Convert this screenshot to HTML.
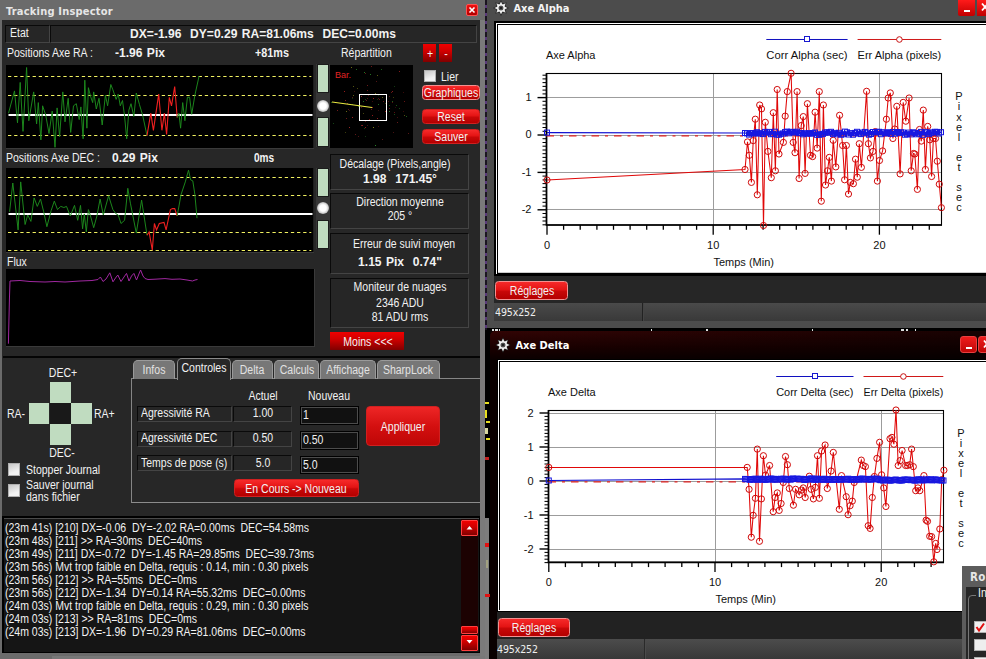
<!DOCTYPE html><html><head><meta charset='utf-8'><title>Tracking Inspector</title><style>
*{margin:0;padding:0;box-sizing:border-box}
html,body{width:986px;height:659px;overflow:hidden;background:#000}
body{position:relative;font-family:"Liberation Sans",sans-serif;font-size:12px;color:#f0f0f0}
.a{position:absolute}
.t{position:absolute;white-space:pre;line-height:14px;height:14px;font-size:12px;transform:scaleX(.875);transform-origin:0 50%;color:#f2f2f2}
.t.c{transform-origin:50% 50%;text-align:center}
.t.b{font-weight:bold;transform:scaleX(1.005);word-spacing:1px}
.tt{position:absolute;white-space:pre;font-family:"DejaVu Sans Condensed","DejaVu Sans",sans-serif;font-weight:bold;font-size:11px;line-height:14px;letter-spacing:.2px;color:#e6e6e6}
.ct{position:absolute;white-space:pre;font-size:11px;line-height:13px;color:#111}
.sunk{position:absolute;background:#262626;border:1px solid;border-color:#0a0a0a #444 #444 #0a0a0a}
.blk{position:absolute;background:#000;border:1px solid;border-color:#000 #3a3a3a #3a3a3a #000}
.pg{position:absolute;background:#c0dcc0}
.rb{position:absolute;border-radius:3.5px;border:1px solid #d02020;background:linear-gradient(#f62a2a 0%,#e41414 45%,#c80808 55%,#b40000 100%)}
.rb.f{border-color:#f49090}
.sq{position:absolute;background:linear-gradient(#f00000 0%,#d00000 40%,#800000 100%)}
.cb{position:absolute;background:linear-gradient(160deg,#c8c8c8,#f2f2f2 70%);border:1px solid #b0b0b0}
.tab{position:absolute;background:#777;border:1px solid #9a9a9a;border-bottom:none;border-radius:5px 5px 0 0}
.inp{position:absolute;background:#111;border:1px solid #4c4c4c;outline:1px solid #000}
</style></head><body><div class='a' style='left:484px;top:0;width:3px;height:330px;background:repeating-linear-gradient(#1a1420 0 5px,#5a3a7a 5px 8px)'></div><div class='a' style='left:484.5px;top:518px;width:4.5px;height:141px;background:#7c7c7c'></div><div class='a' style='left:485px;top:402px;width:4px;height:2px;background:#e8e020'></div><div class='a' style='left:485px;top:410px;width:2px;height:8px;background:#e8e020'></div><div class='a' style='left:486px;top:421px;width:4px;height:2px;background:#e8e020'></div><div class='a' style='left:485px;top:428px;width:3px;height:6px;background:#d8d8a0'></div><div class='a' style='left:486px;top:438px;width:4px;height:2px;background:#e8e020'></div><div class='a' style='left:485px;top:457px;width:4px;height:3px;background:#c02020'></div><div class='a' style='left:485px;top:543px;width:4px;height:4px;background:#e01010'></div><div class='a' style='left:485px;top:594px;width:5px;height:3px;background:#e01010'></div><div class='a' style='left:486px;top:560px;width:2px;height:8px;background:#a0a080'></div><div class='a' style='left:0px;top:0px;width:484.6px;height:659px;background:#6b6b6b'></div><div class='a' style='left:479.5px;top:20px;width:5.100000000000023px;height:639px;background:#7a7a7a'></div><div class='a' style='left:52px;top:656px;width:432.5px;height:3px;background:#787878'></div><div class='a' style='left:2px;top:20px;width:477.6px;height:633px;background:#272727'></div><div class='tt' style='left:6px;top:4.5px'>Tracking Inspector</div><div class='a' style='left:466px;top:4px;width:12px;height:12px;background:linear-gradient(#f01010,#b00000);border:1px solid #ff5050;border-radius:2px'></div><svg class='a' style='left:466px;top:4px' width='12' height='12'><path d='M3.5 3.5L8.5 8.5M8.5 3.5L3.5 8.5' stroke='#fff' stroke-width='1.6'/></svg><div class='sunk' style='left:5px;top:24.5px;width:44.5px;height:18.0px;'></div><div class='t ' style='left:10px;top:26px;'>Etat</div><div class='sunk' style='left:49.5px;top:24.5px;width:427.5px;height:18.0px;'></div><div class='t c b' style='left:62.5px;width:400px;top:26.5px;'>DX=-1.96  DY=0.29 RA=81.06ms  DEC=0.00ms</div><div class='t ' style='left:7px;top:46px;'>Positions Axe RA :</div><div class='t b' style='left:115px;top:46px;'>-1.96 Pix</div><div class='t b' style='left:255px;top:46px;transform:scaleX(.9)'>+81ms</div><div class='t ' style='left:341px;top:46px;'>Répartition</div><div class='sq' style='left:423px;top:44px;width:13px;height:18px;'></div><div class='t c ' style='left:423.5px;width:12px;top:47px;'>+</div><div class='sq' style='left:439px;top:44px;width:13px;height:18px;'></div><div class='t c ' style='left:439.5px;width:12px;top:47px;'>-</div><div class='blk' style='left:6px;top:65px;width:308.4px;height:84px;border-top:none;border-left:none'></div><svg class='a' style='left:6px;top:65px' width='307.5' height='83' viewBox='6 65 307.5 83'><rect x='6' y='65' width='307.5' height='83' fill='#000'/><line x1='8' x2='311.3' y1='76.5' y2='76.5' stroke='#f0f060' stroke-width='1' stroke-dasharray='3.3 2.85'/><line x1='8' x2='311.3' y1='95.5' y2='95.5' stroke='#f0f060' stroke-width='1' stroke-dasharray='3.3 2.85'/><line x1='8' x2='311.3' y1='135.5' y2='135.5' stroke='#f0f060' stroke-width='1' stroke-dasharray='3.3 2.85'/><rect x='8.5' y='114' width='304.0' height='2' fill='#fff'/><polyline points='8.5,113.2 14.5,90.9 17.5,122.8 20.2,82.4 23.0,131.4 26.6,67.5 28.8,120.7 33.7,91.9 36.6,123.9 38.3,102.6 40.9,139.9 42.6,105.8 45.8,115.4 49.0,133.5 52.2,111.1 55.0,147.3 57.1,107.9 59.6,136.7 62.8,91.9 65.0,121.8 68.2,98.3 70.7,132.4 73.5,105.8 76.3,103.7 79.2,119.6 80.9,106.9 83.1,138.8 84.8,80.2 86.9,128.2 88.4,87.7 90.5,96.2 92.7,102.6 93.7,91.9 96.3,109.0 99.0,98.3 102.2,125.0 105.4,95.1 107.6,105.8 110.8,84.5 112.9,89.8 116.1,99.4 118.2,94.1 120.3,105.8 122.5,100.5 124.6,116.4 126.7,138.8 128.9,110.1 131.0,103.7 133.8,116.4 136.3,93.0 139.5,104.7 142.7,115.4 147.0,135.6' fill='none' stroke='#1e8c1e' stroke-width='0.95'/><polyline points='147.0,135.6 150.8,113.2 153.4,130.3 158.7,94.1 161.9,130.3 164.4,113.2 166.6,134.5 169.3,97.3 171.5,105.8 174.7,86.6 177.2,117.5' fill='none' stroke='#f02020' stroke-width='1.1'/><polyline points='177.2,117.5 178.9,113.2 180.6,128.2 182.7,102.6 184.9,120.7 187.4,97.3 189.6,97.3 191.7,114.3 194.9,95.1 199.1,76.0' fill='none' stroke='#1e8c1e' stroke-width='0.95'/></svg><div class='t ' style='left:5.5px;top:151px;'>Positions Axe DEC :</div><div class='t b' style='left:112px;top:151px;'>0.29 Pix</div><div class='t b' style='left:253.5px;top:151px;transform:scaleX(.84)'>0ms</div><div class='blk' style='left:6px;top:168px;width:308.4px;height:85px;border-top:none;border-left:none'></div><svg class='a' style='left:6px;top:168px' width='307.5' height='84' viewBox='6 168 307.5 84'><rect x='6' y='168' width='307.5' height='84' fill='#000'/><line x1='8' x2='311.3' y1='177.5' y2='177.5' stroke='#f0f060' stroke-width='1' stroke-dasharray='3.3 2.85'/><line x1='8' x2='311.3' y1='195.5' y2='195.5' stroke='#f0f060' stroke-width='1' stroke-dasharray='3.3 2.85'/><line x1='8' x2='311.3' y1='232.5' y2='232.5' stroke='#f0f060' stroke-width='1' stroke-dasharray='3.3 2.85'/><line x1='8' x2='311.3' y1='250.5' y2='250.5' stroke='#f0f060' stroke-width='1' stroke-dasharray='3.3 2.85'/><rect x='8.5' y='213' width='304.0' height='2' fill='#fff'/><polyline points='9.6,211.8 12.8,183.0 18.1,229.9 20.7,181.9 25.1,224.5 27.7,215.0 30.9,221.4 34.1,197.9 37.3,206.4 40.5,199.0 43.7,211.8 46.9,226.7 51.1,210.7 54.3,201.1 57.5,209.6 60.7,206.4 63.9,207.5 66.5,206.4 70.3,216.0 74.5,205.4 77.7,220.3 80.5,205.4 82.6,228.8 84.3,213.9 86.3,232.0 88.4,209.6 90.5,216.0 93.7,227.7 96.9,216.0 100.1,199.0 103.3,215.0 108.6,195.8 112.9,209.6 116.1,213.9 118.2,215.0 121.0,223.5 124.6,220.3 127.8,188.3 130.4,203.2 136.3,233.1 141.6,200.1 147.0,235.2' fill='none' stroke='#1e8c1e' stroke-width='0.95'/><polyline points='147.0,235.2 149.1,232.0 152.3,250.1 154.4,223.5 156.5,229.9 159.3,223.5 164.0,222.4 166.1,229.9 170.4,209.6 172.5,208.6 174.7,208.6 177.2,216.0' fill='none' stroke='#f02020' stroke-width='1.1'/><polyline points='177.2,216.0 181.0,194.7 185.3,181.9 188.5,170.2 190.6,179.8 192.8,180.9 194.9,194.7 197.0,218.2' fill='none' stroke='#1e8c1e' stroke-width='0.95'/></svg><div class='a' style='left:316px;top:63.5px;width:13.5px;height:83.80000000000001px;background:#363636'></div><div class='pg' style='left:316.7px;top:63.5px;width:12.0px;height:29.700000000000003px;border:1px solid #1c1c1c'></div><div class='pg' style='left:316.7px;top:117.3px;width:12.0px;height:30.000000000000014px;border:1px solid #1c1c1c'></div><div class='a' style='left:316.5px;top:99.7px;width:12px;height:12px;border-radius:50%;background:radial-gradient(circle at 50% 50%,#fff 0%,#fff 38%,#d4d4d4 60%,#8a8a8a 80%,rgba(70,70,70,0) 100%)'></div><div class='a' style='left:316px;top:167.5px;width:13.5px;height:81.80000000000001px;background:#363636'></div><div class='pg' style='left:316.7px;top:167.5px;width:12.0px;height:29.5px;border:1px solid #1c1c1c'></div><div class='pg' style='left:316.7px;top:219.5px;width:12.0px;height:29.80000000000001px;border:1px solid #1c1c1c'></div><div class='a' style='left:316.5px;top:202px;width:12px;height:12px;border-radius:50%;background:radial-gradient(circle at 50% 50%,#fff 0%,#fff 38%,#d4d4d4 60%,#8a8a8a 80%,rgba(70,70,70,0) 100%)'></div><div class='t ' style='left:7px;top:255px;'>Flux</div><div class='blk' style='left:6px;top:268.5px;width:309px;height:78.5px;border-top:none;border-left:none'></div><svg class='a' style='left:6px;top:269px' width='308' height='77' viewBox='6 269 308 77'><polyline points='8.4,343.7 9.4,300.0 10.0,281.0 20.0,280.5 30.0,281.5 45.0,282.0 55.0,281.5 65.0,282.0 80.0,281.0 92.0,280.5 98.0,279.5 100.4,277.0 103.0,281.5 106.0,279.0 109.8,272.8 113.0,281.8 115.5,278.0 117.8,275.0 121.0,281.5 124.0,277.0 126.5,273.4 129.0,281.0 131.5,276.0 133.9,273.4 136.5,280.0 138.5,275.0 140.6,270.0 143.0,276.0 145.0,278.5 148.0,279.5 155.0,279.2 165.0,278.6 172.0,279.3 180.0,279.0 187.0,280.0 192.5,281.0 195.0,280.0 197.5,279.5' fill='none' stroke='#a028a0' stroke-width='1'/></svg><div class='a' style='left:330px;top:65px;width:83px;height:83px;background:#000'></div><svg class='a' style='left:330px;top:65px' width='83' height='83' viewBox='330 65 83 83'><rect x='373' y='127' width='1' height='1' fill='#a0a020' opacity='0.80'/><rect x='349' y='110' width='1' height='1' fill='#c03030' opacity='0.31'/><rect x='378' y='95' width='1' height='1' fill='#208020' opacity='0.41'/><rect x='367' y='85' width='1' height='1' fill='#c03030' opacity='0.56'/><rect x='365' y='99' width='1' height='1' fill='#30a030' opacity='0.38'/><rect x='386' y='98' width='1' height='1' fill='#b02020' opacity='0.67'/><rect x='397' y='117' width='1' height='1' fill='#c03030' opacity='0.32'/><rect x='377' y='75' width='1' height='1' fill='#a0a020' opacity='0.56'/><rect x='364' y='72' width='1' height='1' fill='#30a030' opacity='0.73'/><rect x='346' y='118' width='1' height='1' fill='#c03030' opacity='0.54'/><rect x='403' y='92' width='1' height='1' fill='#b02020' opacity='0.32'/><rect x='358' y='106' width='1' height='1' fill='#30a030' opacity='0.54'/><rect x='361' y='96' width='1' height='1' fill='#c03030' opacity='0.76'/><rect x='352' y='97' width='1' height='1' fill='#802020' opacity='0.62'/><rect x='392' y='91' width='1' height='1' fill='#b02020' opacity='0.77'/><rect x='396' y='105' width='1' height='1' fill='#208020' opacity='0.68'/><rect x='361' y='125' width='1' height='1' fill='#c03030' opacity='0.61'/><rect x='368' y='95' width='1' height='1' fill='#c03030' opacity='0.45'/><rect x='385' y='120' width='1' height='1' fill='#30a030' opacity='0.84'/><rect x='397' y='122' width='1' height='1' fill='#802020' opacity='0.79'/><rect x='389' y='108' width='1' height='1' fill='#802020' opacity='0.78'/><rect x='394' y='112' width='1' height='1' fill='#b02020' opacity='0.51'/><rect x='353' y='95' width='1' height='1' fill='#a0a020' opacity='0.58'/><rect x='386' y='106' width='1' height='1' fill='#b02020' opacity='0.36'/><rect x='385' y='103' width='1' height='1' fill='#a0a020' opacity='0.39'/><rect x='404' y='115' width='1' height='1' fill='#a0a020' opacity='0.50'/><rect x='393' y='132' width='1' height='1' fill='#802020' opacity='0.55'/><rect x='347' y='103' width='1' height='1' fill='#c03030' opacity='0.67'/><rect x='408' y='133' width='1' height='1' fill='#c03030' opacity='0.45'/><rect x='353' y='86' width='1' height='1' fill='#a0a020' opacity='0.54'/><rect x='370' y='120' width='1' height='1' fill='#a0a020' opacity='0.31'/><rect x='352' y='117' width='1' height='1' fill='#b02020' opacity='0.51'/><rect x='363' y='101' width='1' height='1' fill='#30a030' opacity='0.65'/><rect x='346' y='111' width='1' height='1' fill='#a0a020' opacity='0.63'/><rect x='367' y='125' width='1' height='1' fill='#c03030' opacity='0.33'/><rect x='351' y='67' width='1' height='1' fill='#a0a020' opacity='0.65'/><rect x='364' y='128' width='1' height='1' fill='#208020' opacity='0.50'/><rect x='365' y='121' width='1' height='1' fill='#c03030' opacity='0.45'/><rect x='373' y='98' width='1' height='1' fill='#b02020' opacity='0.83'/><rect x='367' y='98' width='1' height='1' fill='#c03030' opacity='0.42'/><rect x='375' y='94' width='1' height='1' fill='#208020' opacity='0.67'/><rect x='366' y='100' width='1' height='1' fill='#c03030' opacity='0.48'/><rect x='355' y='134' width='1' height='1' fill='#802020' opacity='0.75'/><rect x='378' y='104' width='1' height='1' fill='#30a030' opacity='0.66'/><rect x='385' y='94' width='1' height='1' fill='#208020' opacity='0.73'/><rect x='358' y='136' width='1' height='1' fill='#c03030' opacity='0.40'/><rect x='365' y='136' width='1' height='1' fill='#30a030' opacity='0.35'/><rect x='354' y='91' width='1' height='1' fill='#802020' opacity='0.46'/><rect x='375' y='93' width='1' height='1' fill='#a0a020' opacity='0.65'/><rect x='365' y='127' width='1' height='1' fill='#b02020' opacity='0.81'/><rect x='372' y='107' width='1' height='1' fill='#c03030' opacity='0.84'/><rect x='333' y='123' width='1' height='1' fill='#30a030' opacity='0.42'/><rect x='370' y='74' width='1' height='1' fill='#30a030' opacity='0.71'/><rect x='392' y='101' width='1' height='1' fill='#208020' opacity='0.77'/><rect x='399' y='71' width='1' height='1' fill='#b02020' opacity='0.75'/><rect x='406' y='116' width='1' height='1' fill='#30a030' opacity='0.58'/><rect x='382' y='139' width='1' height='1' fill='#802020' opacity='0.62'/><rect x='399' y='108' width='1' height='1' fill='#208020' opacity='0.58'/><rect x='371' y='109' width='1' height='1' fill='#c03030' opacity='0.53'/><rect x='393' y='97' width='1' height='1' fill='#a0a020' opacity='0.37'/><rect x='392' y='102' width='1' height='1' fill='#b02020' opacity='0.49'/><rect x='378' y='126' width='1' height='1' fill='#b02020' opacity='0.39'/><rect x='381' y='69' width='1' height='1' fill='#208020' opacity='0.75'/><rect x='395' y='107' width='1' height='1' fill='#802020' opacity='0.33'/><rect x='369' y='119' width='1' height='1' fill='#c03030' opacity='0.59'/><rect x='385' y='111' width='1' height='1' fill='#b02020' opacity='0.77'/><rect x='372' y='101' width='1' height='1' fill='#b02020' opacity='0.34'/><rect x='404' y='101' width='1' height='1' fill='#b02020' opacity='0.58'/><rect x='361' y='107' width='1' height='1' fill='#b02020' opacity='0.49'/><rect x='357' y='88' width='1' height='1' fill='#a0a020' opacity='0.45'/><rect x='389' y='105' width='1' height='1' fill='#208020' opacity='0.61'/><rect x='367' y='90' width='1' height='1' fill='#b02020' opacity='0.61'/><rect x='389' y='111' width='1' height='1' fill='#30a030' opacity='0.73'/><rect x='349' y='127' width='1' height='1' fill='#c03030' opacity='0.79'/><rect x='394' y='114' width='1' height='1' fill='#30a030' opacity='0.47'/><rect x='388' y='101' width='1' height='1' fill='#b02020' opacity='0.43'/><rect x='345' y='100' width='1' height='1' fill='#b02020' opacity='0.74'/><rect x='372' y='115' width='1' height='1' fill='#b02020' opacity='0.82'/><rect x='345' y='132' width='1' height='1' fill='#a0a020' opacity='0.37'/><rect x='356' y='69' width='1' height='1' fill='#30a030' opacity='0.66'/><rect x='394' y='86' width='1' height='1' fill='#30a030' opacity='0.36'/><rect x='362' y='125' width='1' height='1' fill='#c03030' opacity='0.69'/><rect x='359' y='108' width='1' height='1' fill='#802020' opacity='0.32'/><rect x='378' y='110' width='1' height='1' fill='#802020' opacity='0.40'/><rect x='403' y='111' width='1' height='1' fill='#b02020' opacity='0.31'/><rect x='386' y='119' width='1' height='1' fill='#30a030' opacity='0.82'/><rect x='344' y='91' width='1' height='1' fill='#b02020' opacity='0.85'/><rect x='352' y='98' width='1' height='1' fill='#208020' opacity='0.36'/><rect x='371' y='66' width='1' height='1' fill='#b02020' opacity='0.60'/><rect x='378' y='98' width='1' height='1' fill='#b02020' opacity='0.43'/><rect x='377' y='118' width='1' height='1' fill='#c03030' opacity='0.69'/><rect x='383' y='101' width='1' height='1' fill='#c03030' opacity='0.52'/><rect x='361' y='120' width='1' height='1' fill='#b02020' opacity='0.51'/><rect x='375' y='145' width='1' height='1' fill='#30a030' opacity='0.83'/><rect x='352' y='117' width='1' height='1' fill='#c03030' opacity='0.67'/><rect x='352' y='104' width='1' height='1' fill='#30a030' opacity='0.52'/><rect x='379' y='99' width='1' height='1' fill='#802020' opacity='0.71'/><rect x='389' y='96' width='1' height='1' fill='#802020' opacity='0.62'/><rect x='377' y='99' width='1' height='1' fill='#208020' opacity='0.38'/><rect x='331' y='102' width='1' height='1' fill='#30a030' opacity='0.60'/><rect x='376' y='81' width='1' height='1' fill='#802020' opacity='0.63'/><rect x='382' y='97' width='1' height='1' fill='#a0a020' opacity='0.56'/><rect x='363' y='113' width='1' height='1' fill='#a0a020' opacity='0.43'/><rect x='337' y='110' width='1' height='1' fill='#802020' opacity='0.85'/><rect x='348' y='109' width='1' height='1' fill='#802020' opacity='0.62'/><rect x='391' y='92' width='1' height='1' fill='#b02020' opacity='0.56'/><rect x='365' y='73' width='1' height='1' fill='#802020' opacity='0.73'/><rect x='359.5' y='94.5' width='27' height='26' fill='none' stroke='#fff' stroke-width='1'/><line x1='332' y1='102' x2='372' y2='107.5' stroke='#e8e840' stroke-width='1.2'/><text x='335' y='78' font-family='Liberation Sans,sans-serif' font-size='9' fill='#e02424' textLength='16'>Bar.</text></svg><div class='cb' style='left:424px;top:70px;width:12px;height:12px;'></div><div class='t ' style='left:441px;top:70px;'>Lier</div><div class='rb f' style='left:422px;top:85px;width:58px;height:15px;'></div><div class='t c ' style='left:411.0px;width:80px;top:85.5px;'>Graphiques</div><div class='rb' style='left:422px;top:109px;width:58px;height:15px;'></div><div class='t c ' style='left:411.0px;width:80px;top:109.5px;'>Reset</div><div class='rb' style='left:422px;top:129px;width:58px;height:15px;'></div><div class='t c ' style='left:411.0px;width:80px;top:129.5px;'>Sauver</div><div class='sunk' style='left:330px;top:154px;width:139px;height:36px;'></div><div class='t c ' style='left:295.0px;width:200px;top:157px;'>Décalage (Pixels,angle)</div><div class='t c b' style='left:299.5px;width:200px;top:172px;'>1.98  171.45°</div><div class='sunk' style='left:330px;top:193px;width:139px;height:36px;'></div><div class='t c ' style='left:299.5px;width:200px;top:195px;'>Direction moyenne</div><div class='t c ' style='left:299.5px;width:200px;top:209px;'>205 °</div><div class='sunk' style='left:330px;top:233px;width:139px;height:41px;'></div><div class='t c ' style='left:304.0px;width:200px;top:237px;'>Erreur de suivi moyen</div><div class='t c b' style='left:299.5px;width:200px;top:254.5px;'>1.15 Pix  0.74"</div><div class='sunk' style='left:330px;top:278px;width:139px;height:50px;'></div><div class='t c ' style='left:299.5px;width:200px;top:280px;'>Moniteur de nuages</div><div class='t c ' style='left:299.5px;width:200px;top:295.5px;'>2346 ADU</div><div class='t c ' style='left:299.5px;width:200px;top:310px;'>81 ADU rms</div><div class='sq' style='left:330px;top:332px;width:74px;height:18px;'></div><div class='t c ' style='left:327.5px;width:80px;top:335.3px;'>Moins &lt;&lt;&lt;</div><div class='a' style='left:3px;top:356px;width:477px;height:2px;background:#050505'></div><div class='t c ' style='left:33.0px;width:60px;top:366px;'>DEC+</div><div class='t c ' style='left:32.0px;width:60px;top:446px;'>DEC-</div><div class='t ' style='left:6.5px;top:407px;'>RA-</div><div class='t ' style='left:94px;top:407px;'>RA+</div><div class='a' style='left:50px;top:403px;width:21px;height:21px;background:#191919'></div><div class='pg' style='left:50px;top:382px;width:20.5px;height:20.5px;'></div><div class='pg' style='left:28.5px;top:403px;width:20.5px;height:20.5px;'></div><div class='pg' style='left:71px;top:403px;width:20.5px;height:20.5px;'></div><div class='pg' style='left:50px;top:424px;width:20.5px;height:20.5px;'></div><div class='cb' style='left:7.5px;top:463px;width:12.5px;height:12.5px;'></div><div class='t ' style='left:25.5px;top:463px;'>Stopper Journal</div><div class='cb' style='left:7.5px;top:484px;width:12.5px;height:12.5px;'></div><div class='t ' style='left:25.5px;top:477.5px;'>Sauver journal</div><div class='t ' style='left:25.5px;top:490px;'>dans fichier</div><div class='a' style='left:131px;top:378px;width:349px;height:125px;background:#272727;border:1px solid #858585;border-right:none;border-bottom-color:#8c8c8c'></div><div class='tab' style='left:133px;top:360px;width:42px;height:18.5px;'></div><div class='t c ' style='left:114.0px;width:80px;top:362.5px;color:#e2e2e2'>Infos</div><div class='tab' style='left:231.5px;top:360px;width:41.5px;height:18.5px;'></div><div class='t c ' style='left:212.25px;width:80px;top:362.5px;color:#e2e2e2'>Delta</div><div class='tab' style='left:274px;top:360px;width:45px;height:18.5px;'></div><div class='t c ' style='left:256.5px;width:80px;top:362.5px;color:#e2e2e2'>Calculs</div><div class='tab' style='left:320px;top:360px;width:55.5px;height:18.5px;'></div><div class='t c ' style='left:307.75px;width:80px;top:362.5px;color:#e2e2e2'>Affichage</div><div class='tab' style='left:376.5px;top:360px;width:63.0px;height:18.5px;'></div><div class='t c ' style='left:368.0px;width:80px;top:362.5px;color:#e2e2e2'>SharpLock</div><div class='tab' style='left:176.5px;top:358px;width:54.0px;height:21.5px;background:#272727;border-color:#8a8a8a'></div><div class='t c ' style='left:163.5px;width:80px;top:361px;'>Controles</div><div class='t c ' style='left:223.0px;width:80px;top:389px;'>Actuel</div><div class='t c ' style='left:289.0px;width:80px;top:389px;'>Nouveau</div><div class='sunk' style='left:137px;top:405.5px;width:95px;height:16.0px;'></div><div class='t ' style='left:141px;top:406.0px;'>Agressivité RA</div><div class='sunk' style='left:233px;top:405.5px;width:59px;height:16.0px;'></div><div class='t c ' style='left:232.5px;width:60px;top:406.0px;'>1.00</div><div class='inp' style='left:301px;top:407.0px;width:56.5px;height:16.5px;'></div><div class='t ' style='left:302.5px;top:408.0px;'>1</div><div class='sunk' style='left:137px;top:430.5px;width:95px;height:16.0px;'></div><div class='t ' style='left:141px;top:431.0px;'>Agressivité DEC</div><div class='sunk' style='left:233px;top:430.5px;width:59px;height:16.0px;'></div><div class='t c ' style='left:232.5px;width:60px;top:431.0px;'>0.50</div><div class='inp' style='left:301px;top:432.0px;width:56.5px;height:16.5px;'></div><div class='t ' style='left:302.5px;top:433.0px;'>0.50</div><div class='sunk' style='left:137px;top:455.3px;width:95px;height:16.0px;'></div><div class='t ' style='left:141px;top:455.8px;'>Temps de pose (s)</div><div class='sunk' style='left:233px;top:455.3px;width:59px;height:16.0px;'></div><div class='t c ' style='left:232.5px;width:60px;top:455.8px;'>5.0</div><div class='inp' style='left:301px;top:456.8px;width:56.5px;height:16.5px;'></div><div class='t ' style='left:302.5px;top:457.8px;'>5.0</div><div class='rb' style='left:366px;top:406px;width:73.5px;height:40px;border-radius:4px;background:linear-gradient(#ee2626,#d41010 50%,#be0606)'></div><div class='t c ' style='left:363.0px;width:80px;top:419.5px;'>Appliquer</div><div class='rb' style='left:233.5px;top:479px;width:125.0px;height:18px;'></div><div class='t c ' style='left:226.0px;width:140px;top:481.7px;'>En Cours -&gt; Nouveau</div><div class='a' style='left:2px;top:516px;width:477.6px;height:137px;background:#000'></div><div class='a' style='left:3.6px;top:518.3px;width:475.4px;height:133.70000000000005px;background:#151515;border-top:1px solid #4a4a4a'></div><div class='t ' style='left:4.8px;top:521px;'>(23m 41s) [210] DX=-0.06  DY=-2.02 RA=0.00ms  DEC=54.58ms</div><div class='t ' style='left:4.8px;top:534px;'>(23m 48s) [211] &gt;&gt; RA=30ms  DEC=40ms</div><div class='t ' style='left:4.8px;top:547px;'>(23m 49s) [211] DX=-0.72  DY=-1.45 RA=29.85ms  DEC=39.73ms</div><div class='t ' style='left:4.8px;top:560px;'>(23m 56s) Mvt trop faible en Delta, requis : 0.14, min : 0.30 pixels</div><div class='t ' style='left:4.8px;top:573px;'>(23m 56s) [212] &gt;&gt; RA=55ms  DEC=0ms</div><div class='t ' style='left:4.8px;top:586px;'>(23m 56s) [212] DX=-1.34  DY=0.14 RA=55.32ms  DEC=0.00ms</div><div class='t ' style='left:4.8px;top:599px;'>(24m 03s) Mvt trop faible en Delta, requis : 0.29, min : 0.30 pixels</div><div class='t ' style='left:4.8px;top:612px;'>(24m 03s) [213] &gt;&gt; RA=81ms  DEC=0ms</div><div class='t ' style='left:4.8px;top:625px;'>(24m 03s) [213] DX=-1.96  DY=0.29 RA=81.06ms  DEC=0.00ms</div><div class='a' style='left:461px;top:519px;width:17px;height:132px;background:#1c0202'></div><div class='sq' style='left:461px;top:519.5px;width:17px;height:16.0px;border:1px solid #ff4040;border-radius:1px'></div><div class='sq' style='left:461px;top:626px;width:17px;height:8px;border:1px solid #ff4040;border-radius:1px'></div><div class='sq' style='left:461px;top:634.5px;width:17px;height:16.5px;border:1px solid #ff4040;border-radius:1px'></div><svg class='a' style='left:461px;top:519px' width='17' height='132'><path d='M5.5 10.5L11.5 10.5L8.5 7z' fill='#fff'/><path d='M5.5 121L11.5 121L8.5 124.5z' fill='#fff'/></svg><div class='a' style='left:487px;top:0px;width:499px;height:328px;background:#4c4c4c'></div><div class='a' style='left:494px;top:21px;width:492px;height:255px;background:#000'></div><div class='a' style='left:496px;top:23px;width:490px;height:251px;background:#fff'></div><div class='a' style='left:497px;top:24px;width:489px;height:249.5px;background:#000'></div><div class='a' style='left:494px;top:276px;width:492px;height:26.5px;background:#262626'></div><div class='a' style='left:494px;top:302.5px;width:492px;height:18.5px;background:linear-gradient(#4a4a4a,#393939)'></div><div class='a' style='left:642px;top:303px;width:1px;height:18px;background:#222;border-right:1px solid #444;width:2px'></div><div class='tt' style='left:513.4px;top:1.5px;letter-spacing:0;color:#f4f4f4'>Axe Alpha</div><svg class='a' style='left:493px;top:-0.4px' width='16' height='16' viewBox='-8 -8 16 16'><polygon points='0.00,-6.60 1.49,-3.60 4.67,-4.67 3.60,-1.49 6.60,0.00 3.60,1.49 4.67,4.67 1.49,3.60 0.00,6.60 -1.49,3.60 -4.67,4.67 -3.60,1.49 -6.60,0.00 -3.60,-1.49 -4.67,-4.67 -1.49,-3.60' fill='#e4e4e4' stroke='#1a1a1a' stroke-width='1.2' paint-order='stroke'/><circle r='2.6' fill='#555'/><circle r='1.3' fill='#222'/><circle r='3.3' fill='none' stroke='#fff' stroke-width='.8'/></svg><div class='a' style='left:958px;top:0px;width:16.5px;height:15.5px;background:linear-gradient(#ff1a1a,#c00000);border-radius:0 0 2px 2px'></div><div class='a' style='left:964px;top:10px;width:6px;height:2px;background:#fff'></div><div class='a' style='left:976.5px;top:0px;width:13.5px;height:15.5px;background:linear-gradient(#ff1a1a,#c00000)'></div><svg class='a' style='left:976px;top:0' width='10' height='16'><path d='M6 3.5L12 10.5M12 3.5L6 10.5' stroke='#fff' stroke-width='1.8'/></svg><svg class='a' style='left:498px;top:25px' width='488' height='247.8' viewBox='498 25 488 247.8'><rect x='498' y='25' width='488' height='247.8' fill='#fff'/><line x1='546.5' x2='941.5' y1='97.5' y2='97.5' stroke='#9c9c9c' stroke-width='1'/><line x1='546.5' x2='941.5' y1='135.5' y2='135.5' stroke='#9c9c9c' stroke-width='1'/><line x1='546.5' x2='941.5' y1='172.5' y2='172.5' stroke='#9c9c9c' stroke-width='1'/><line x1='546.5' x2='941.5' y1='209.5' y2='209.5' stroke='#9c9c9c' stroke-width='1'/><line x1='713.5' x2='713.5' y1='73.5' y2='225' stroke='#9c9c9c' stroke-width='1'/><line x1='879.5' x2='879.5' y1='73.5' y2='225' stroke='#9c9c9c' stroke-width='1'/><line x1='542.5' x2='546.5' y1='224.8' y2='224.8' stroke='#000' stroke-width='1.05'/><line x1='542.5' x2='546.5' y1='221.0' y2='221.0' stroke='#000' stroke-width='1.05'/><line x1='542.5' x2='546.5' y1='217.3' y2='217.3' stroke='#000' stroke-width='1.05'/><line x1='542.5' x2='546.5' y1='213.5' y2='213.5' stroke='#000' stroke-width='1.05'/><line x1='537.5' x2='546.5' y1='209.8' y2='209.8' stroke='#000' stroke-width='1.4'/><line x1='542.5' x2='546.5' y1='206.1' y2='206.1' stroke='#000' stroke-width='1.05'/><line x1='542.5' x2='546.5' y1='202.3' y2='202.3' stroke='#000' stroke-width='1.05'/><line x1='542.5' x2='546.5' y1='198.6' y2='198.6' stroke='#000' stroke-width='1.05'/><line x1='542.5' x2='546.5' y1='194.8' y2='194.8' stroke='#000' stroke-width='1.05'/><line x1='542.5' x2='546.5' y1='191.1' y2='191.1' stroke='#000' stroke-width='1.05'/><line x1='542.5' x2='546.5' y1='187.4' y2='187.4' stroke='#000' stroke-width='1.05'/><line x1='542.5' x2='546.5' y1='183.6' y2='183.6' stroke='#000' stroke-width='1.05'/><line x1='542.5' x2='546.5' y1='179.9' y2='179.9' stroke='#000' stroke-width='1.05'/><line x1='542.5' x2='546.5' y1='176.1' y2='176.1' stroke='#000' stroke-width='1.05'/><line x1='537.5' x2='546.5' y1='172.4' y2='172.4' stroke='#000' stroke-width='1.4'/><line x1='542.5' x2='546.5' y1='168.7' y2='168.7' stroke='#000' stroke-width='1.05'/><line x1='542.5' x2='546.5' y1='164.9' y2='164.9' stroke='#000' stroke-width='1.05'/><line x1='542.5' x2='546.5' y1='161.2' y2='161.2' stroke='#000' stroke-width='1.05'/><line x1='542.5' x2='546.5' y1='157.4' y2='157.4' stroke='#000' stroke-width='1.05'/><line x1='542.5' x2='546.5' y1='153.7' y2='153.7' stroke='#000' stroke-width='1.05'/><line x1='542.5' x2='546.5' y1='150.0' y2='150.0' stroke='#000' stroke-width='1.05'/><line x1='542.5' x2='546.5' y1='146.2' y2='146.2' stroke='#000' stroke-width='1.05'/><line x1='542.5' x2='546.5' y1='142.5' y2='142.5' stroke='#000' stroke-width='1.05'/><line x1='542.5' x2='546.5' y1='138.7' y2='138.7' stroke='#000' stroke-width='1.05'/><line x1='537.5' x2='546.5' y1='135.0' y2='135.0' stroke='#000' stroke-width='1.4'/><line x1='542.5' x2='546.5' y1='131.3' y2='131.3' stroke='#000' stroke-width='1.05'/><line x1='542.5' x2='546.5' y1='127.5' y2='127.5' stroke='#000' stroke-width='1.05'/><line x1='542.5' x2='546.5' y1='123.8' y2='123.8' stroke='#000' stroke-width='1.05'/><line x1='542.5' x2='546.5' y1='120.0' y2='120.0' stroke='#000' stroke-width='1.05'/><line x1='542.5' x2='546.5' y1='116.3' y2='116.3' stroke='#000' stroke-width='1.05'/><line x1='542.5' x2='546.5' y1='112.6' y2='112.6' stroke='#000' stroke-width='1.05'/><line x1='542.5' x2='546.5' y1='108.8' y2='108.8' stroke='#000' stroke-width='1.05'/><line x1='542.5' x2='546.5' y1='105.1' y2='105.1' stroke='#000' stroke-width='1.05'/><line x1='542.5' x2='546.5' y1='101.3' y2='101.3' stroke='#000' stroke-width='1.05'/><line x1='537.5' x2='546.5' y1='97.6' y2='97.6' stroke='#000' stroke-width='1.4'/><line x1='542.5' x2='546.5' y1='93.9' y2='93.9' stroke='#000' stroke-width='1.05'/><line x1='542.5' x2='546.5' y1='90.1' y2='90.1' stroke='#000' stroke-width='1.05'/><line x1='542.5' x2='546.5' y1='86.4' y2='86.4' stroke='#000' stroke-width='1.05'/><line x1='542.5' x2='546.5' y1='82.6' y2='82.6' stroke='#000' stroke-width='1.05'/><line x1='542.5' x2='546.5' y1='78.9' y2='78.9' stroke='#000' stroke-width='1.05'/><line x1='542.5' x2='546.5' y1='75.2' y2='75.2' stroke='#000' stroke-width='1.05'/><line x1='547.0' x2='547.0' y1='225' y2='234.7' stroke='#000' stroke-width='1.3'/><text x='547.0' y='249.3' text-anchor='middle' font-family='Liberation Sans,sans-serif' font-size='11' fill='#111'>0</text><line x1='563.6' x2='563.6' y1='225' y2='229.8' stroke='#000' stroke-width='1.3'/><line x1='580.2' x2='580.2' y1='225' y2='229.8' stroke='#000' stroke-width='1.3'/><line x1='596.9' x2='596.9' y1='225' y2='229.8' stroke='#000' stroke-width='1.3'/><line x1='613.5' x2='613.5' y1='225' y2='229.8' stroke='#000' stroke-width='1.3'/><line x1='630.1' x2='630.1' y1='225' y2='229.8' stroke='#000' stroke-width='1.3'/><line x1='646.7' x2='646.7' y1='225' y2='229.8' stroke='#000' stroke-width='1.3'/><line x1='663.3' x2='663.3' y1='225' y2='229.8' stroke='#000' stroke-width='1.3'/><line x1='680.0' x2='680.0' y1='225' y2='229.8' stroke='#000' stroke-width='1.3'/><line x1='696.6' x2='696.6' y1='225' y2='229.8' stroke='#000' stroke-width='1.3'/><line x1='713.2' x2='713.2' y1='225' y2='234.7' stroke='#000' stroke-width='1.3'/><text x='713.2' y='249.3' text-anchor='middle' font-family='Liberation Sans,sans-serif' font-size='11' fill='#111'>10</text><line x1='729.8' x2='729.8' y1='225' y2='229.8' stroke='#000' stroke-width='1.3'/><line x1='746.4' x2='746.4' y1='225' y2='229.8' stroke='#000' stroke-width='1.3'/><line x1='763.1' x2='763.1' y1='225' y2='229.8' stroke='#000' stroke-width='1.3'/><line x1='779.7' x2='779.7' y1='225' y2='229.8' stroke='#000' stroke-width='1.3'/><line x1='796.3' x2='796.3' y1='225' y2='229.8' stroke='#000' stroke-width='1.3'/><line x1='812.9' x2='812.9' y1='225' y2='229.8' stroke='#000' stroke-width='1.3'/><line x1='829.5' x2='829.5' y1='225' y2='229.8' stroke='#000' stroke-width='1.3'/><line x1='846.2' x2='846.2' y1='225' y2='229.8' stroke='#000' stroke-width='1.3'/><line x1='862.8' x2='862.8' y1='225' y2='229.8' stroke='#000' stroke-width='1.3'/><line x1='879.4' x2='879.4' y1='225' y2='234.7' stroke='#000' stroke-width='1.3'/><text x='879.4' y='249.3' text-anchor='middle' font-family='Liberation Sans,sans-serif' font-size='11' fill='#111'>20</text><line x1='896.0' x2='896.0' y1='225' y2='229.8' stroke='#000' stroke-width='1.3'/><line x1='912.6' x2='912.6' y1='225' y2='229.8' stroke='#000' stroke-width='1.3'/><line x1='929.3' x2='929.3' y1='225' y2='229.8' stroke='#000' stroke-width='1.3'/><text x='531.5' y='101.1' text-anchor='end' font-family='Liberation Sans,sans-serif' font-size='11' fill='#111'>1</text><text x='531.5' y='138.5' text-anchor='end' font-family='Liberation Sans,sans-serif' font-size='11' fill='#111'>0</text><text x='531.5' y='175.9' text-anchor='end' font-family='Liberation Sans,sans-serif' font-size='11' fill='#111'>-1</text><text x='531.5' y='213.3' text-anchor='end' font-family='Liberation Sans,sans-serif' font-size='11' fill='#111'>-2</text><rect x='546.5' y='73.5' width='395.0' height='151.5' fill='none' stroke='#000' stroke-width='1.1'/><path d='M546.5 73.0V225H942.0' fill='none' stroke='#000' stroke-width='1.7'/><line x1='546.5' x2='941.5' y1='135.8' y2='135.8' stroke='#e02020' stroke-width='1.3' stroke-dasharray='7.5 6 3 6'/><polyline points='547.0,180.0 745.0,169.5 747.5,141.9 749.3,155.3 751.4,182.4 753.2,140.6 755.3,119.2 757.3,194.8 759.7,105.0 761.5,108.9 763.5,225.5 765.3,122.3 767.9,151.4 771.3,177.7 773.3,112.7 775.4,170.8 777.2,89.5 779.0,154.0 783.4,142.4 785.2,116.1 787.3,91.6 791.1,73.3 793.2,142.4 795.0,152.7 797.1,91.6 799.1,178.5 801.2,125.6 803.3,116.6 805.1,173.4 807.4,103.7 810.5,155.3 812.6,156.6 815.1,112.2 817.2,148.1 819.3,91.6 821.3,201.2 823.4,105.0 825.5,185.0 827.5,170.8 829.3,157.4 831.4,181.1 833.2,140.3 835.8,166.9 839.6,115.3 842.6,145.5 844.6,179.8 846.4,145.5 848.5,194.0 850.3,182.4 853.4,183.7 855.5,159.2 857.3,177.2 859.3,143.7 861.4,167.4 866.6,91.3 868.4,143.7 870.4,157.9 873.0,151.4 875.3,131.6 877.4,181.1 879.5,160.5 882.6,150.9 886.4,119.2 888.2,98.0 890.3,92.9 892.9,138.5 894.7,129.0 896.8,106.3 900.1,173.9 903.2,102.4 905.8,121.2 909.1,98.0 911.2,170.8 913.5,153.5 914.8,154.0 917.4,189.4 919.5,129.5 921.3,141.1 923.3,110.1 925.4,169.5 927.7,126.4 929.8,139.8 931.6,176.5 933.4,138.5 935.5,138.5 937.3,161.2 939.3,184.2 941.4,207.7' fill='none' stroke='#e00808' stroke-width='1.05'/><circle cx='547.0' cy='180.0' r='3.1' fill='none' stroke='#d00808' stroke-width='1'/><circle cx='745.0' cy='169.5' r='3.1' fill='none' stroke='#d00808' stroke-width='1'/><circle cx='747.5' cy='141.9' r='3.1' fill='none' stroke='#d00808' stroke-width='1'/><circle cx='749.3' cy='155.3' r='3.1' fill='none' stroke='#d00808' stroke-width='1'/><circle cx='751.4' cy='182.4' r='3.1' fill='none' stroke='#d00808' stroke-width='1'/><circle cx='753.2' cy='140.6' r='3.1' fill='none' stroke='#d00808' stroke-width='1'/><circle cx='755.3' cy='119.2' r='3.1' fill='none' stroke='#d00808' stroke-width='1'/><circle cx='757.3' cy='194.8' r='3.1' fill='none' stroke='#d00808' stroke-width='1'/><circle cx='759.7' cy='105.0' r='3.1' fill='none' stroke='#d00808' stroke-width='1'/><circle cx='761.5' cy='108.9' r='3.1' fill='none' stroke='#d00808' stroke-width='1'/><circle cx='763.5' cy='225.5' r='3.1' fill='none' stroke='#d00808' stroke-width='1'/><circle cx='765.3' cy='122.3' r='3.1' fill='none' stroke='#d00808' stroke-width='1'/><circle cx='767.9' cy='151.4' r='3.1' fill='none' stroke='#d00808' stroke-width='1'/><circle cx='771.3' cy='177.7' r='3.1' fill='none' stroke='#d00808' stroke-width='1'/><circle cx='773.3' cy='112.7' r='3.1' fill='none' stroke='#d00808' stroke-width='1'/><circle cx='775.4' cy='170.8' r='3.1' fill='none' stroke='#d00808' stroke-width='1'/><circle cx='777.2' cy='89.5' r='3.1' fill='none' stroke='#d00808' stroke-width='1'/><circle cx='779.0' cy='154.0' r='3.1' fill='none' stroke='#d00808' stroke-width='1'/><circle cx='783.4' cy='142.4' r='3.1' fill='none' stroke='#d00808' stroke-width='1'/><circle cx='785.2' cy='116.1' r='3.1' fill='none' stroke='#d00808' stroke-width='1'/><circle cx='787.3' cy='91.6' r='3.1' fill='none' stroke='#d00808' stroke-width='1'/><circle cx='791.1' cy='73.3' r='3.1' fill='none' stroke='#d00808' stroke-width='1'/><circle cx='793.2' cy='142.4' r='3.1' fill='none' stroke='#d00808' stroke-width='1'/><circle cx='795.0' cy='152.7' r='3.1' fill='none' stroke='#d00808' stroke-width='1'/><circle cx='797.1' cy='91.6' r='3.1' fill='none' stroke='#d00808' stroke-width='1'/><circle cx='799.1' cy='178.5' r='3.1' fill='none' stroke='#d00808' stroke-width='1'/><circle cx='801.2' cy='125.6' r='3.1' fill='none' stroke='#d00808' stroke-width='1'/><circle cx='803.3' cy='116.6' r='3.1' fill='none' stroke='#d00808' stroke-width='1'/><circle cx='805.1' cy='173.4' r='3.1' fill='none' stroke='#d00808' stroke-width='1'/><circle cx='807.4' cy='103.7' r='3.1' fill='none' stroke='#d00808' stroke-width='1'/><circle cx='810.5' cy='155.3' r='3.1' fill='none' stroke='#d00808' stroke-width='1'/><circle cx='812.6' cy='156.6' r='3.1' fill='none' stroke='#d00808' stroke-width='1'/><circle cx='815.1' cy='112.2' r='3.1' fill='none' stroke='#d00808' stroke-width='1'/><circle cx='817.2' cy='148.1' r='3.1' fill='none' stroke='#d00808' stroke-width='1'/><circle cx='819.3' cy='91.6' r='3.1' fill='none' stroke='#d00808' stroke-width='1'/><circle cx='821.3' cy='201.2' r='3.1' fill='none' stroke='#d00808' stroke-width='1'/><circle cx='823.4' cy='105.0' r='3.1' fill='none' stroke='#d00808' stroke-width='1'/><circle cx='825.5' cy='185.0' r='3.1' fill='none' stroke='#d00808' stroke-width='1'/><circle cx='827.5' cy='170.8' r='3.1' fill='none' stroke='#d00808' stroke-width='1'/><circle cx='829.3' cy='157.4' r='3.1' fill='none' stroke='#d00808' stroke-width='1'/><circle cx='831.4' cy='181.1' r='3.1' fill='none' stroke='#d00808' stroke-width='1'/><circle cx='833.2' cy='140.3' r='3.1' fill='none' stroke='#d00808' stroke-width='1'/><circle cx='835.8' cy='166.9' r='3.1' fill='none' stroke='#d00808' stroke-width='1'/><circle cx='839.6' cy='115.3' r='3.1' fill='none' stroke='#d00808' stroke-width='1'/><circle cx='842.6' cy='145.5' r='3.1' fill='none' stroke='#d00808' stroke-width='1'/><circle cx='844.6' cy='179.8' r='3.1' fill='none' stroke='#d00808' stroke-width='1'/><circle cx='846.4' cy='145.5' r='3.1' fill='none' stroke='#d00808' stroke-width='1'/><circle cx='848.5' cy='194.0' r='3.1' fill='none' stroke='#d00808' stroke-width='1'/><circle cx='850.3' cy='182.4' r='3.1' fill='none' stroke='#d00808' stroke-width='1'/><circle cx='853.4' cy='183.7' r='3.1' fill='none' stroke='#d00808' stroke-width='1'/><circle cx='855.5' cy='159.2' r='3.1' fill='none' stroke='#d00808' stroke-width='1'/><circle cx='857.3' cy='177.2' r='3.1' fill='none' stroke='#d00808' stroke-width='1'/><circle cx='859.3' cy='143.7' r='3.1' fill='none' stroke='#d00808' stroke-width='1'/><circle cx='861.4' cy='167.4' r='3.1' fill='none' stroke='#d00808' stroke-width='1'/><circle cx='866.6' cy='91.3' r='3.1' fill='none' stroke='#d00808' stroke-width='1'/><circle cx='868.4' cy='143.7' r='3.1' fill='none' stroke='#d00808' stroke-width='1'/><circle cx='870.4' cy='157.9' r='3.1' fill='none' stroke='#d00808' stroke-width='1'/><circle cx='873.0' cy='151.4' r='3.1' fill='none' stroke='#d00808' stroke-width='1'/><circle cx='875.3' cy='131.6' r='3.1' fill='none' stroke='#d00808' stroke-width='1'/><circle cx='877.4' cy='181.1' r='3.1' fill='none' stroke='#d00808' stroke-width='1'/><circle cx='879.5' cy='160.5' r='3.1' fill='none' stroke='#d00808' stroke-width='1'/><circle cx='882.6' cy='150.9' r='3.1' fill='none' stroke='#d00808' stroke-width='1'/><circle cx='886.4' cy='119.2' r='3.1' fill='none' stroke='#d00808' stroke-width='1'/><circle cx='888.2' cy='98.0' r='3.1' fill='none' stroke='#d00808' stroke-width='1'/><circle cx='890.3' cy='92.9' r='3.1' fill='none' stroke='#d00808' stroke-width='1'/><circle cx='892.9' cy='138.5' r='3.1' fill='none' stroke='#d00808' stroke-width='1'/><circle cx='894.7' cy='129.0' r='3.1' fill='none' stroke='#d00808' stroke-width='1'/><circle cx='896.8' cy='106.3' r='3.1' fill='none' stroke='#d00808' stroke-width='1'/><circle cx='900.1' cy='173.9' r='3.1' fill='none' stroke='#d00808' stroke-width='1'/><circle cx='903.2' cy='102.4' r='3.1' fill='none' stroke='#d00808' stroke-width='1'/><circle cx='905.8' cy='121.2' r='3.1' fill='none' stroke='#d00808' stroke-width='1'/><circle cx='909.1' cy='98.0' r='3.1' fill='none' stroke='#d00808' stroke-width='1'/><circle cx='911.2' cy='170.8' r='3.1' fill='none' stroke='#d00808' stroke-width='1'/><circle cx='913.5' cy='153.5' r='3.1' fill='none' stroke='#d00808' stroke-width='1'/><circle cx='914.8' cy='154.0' r='3.1' fill='none' stroke='#d00808' stroke-width='1'/><circle cx='917.4' cy='189.4' r='3.1' fill='none' stroke='#d00808' stroke-width='1'/><circle cx='919.5' cy='129.5' r='3.1' fill='none' stroke='#d00808' stroke-width='1'/><circle cx='921.3' cy='141.1' r='3.1' fill='none' stroke='#d00808' stroke-width='1'/><circle cx='923.3' cy='110.1' r='3.1' fill='none' stroke='#d00808' stroke-width='1'/><circle cx='925.4' cy='169.5' r='3.1' fill='none' stroke='#d00808' stroke-width='1'/><circle cx='927.7' cy='126.4' r='3.1' fill='none' stroke='#d00808' stroke-width='1'/><circle cx='929.8' cy='139.8' r='3.1' fill='none' stroke='#d00808' stroke-width='1'/><circle cx='931.6' cy='176.5' r='3.1' fill='none' stroke='#d00808' stroke-width='1'/><circle cx='933.4' cy='138.5' r='3.1' fill='none' stroke='#d00808' stroke-width='1'/><circle cx='935.5' cy='138.5' r='3.1' fill='none' stroke='#d00808' stroke-width='1'/><circle cx='937.3' cy='161.2' r='3.1' fill='none' stroke='#d00808' stroke-width='1'/><circle cx='939.3' cy='184.2' r='3.1' fill='none' stroke='#d00808' stroke-width='1'/><circle cx='941.4' cy='207.7' r='3.1' fill='none' stroke='#d00808' stroke-width='1'/><polyline points='547.0,132.6 745.0,133.0 747.0,133.4 749.0,134.6 751.0,133.1 753.0,133.2 755.0,133.5 757.0,132.2 759.0,133.2 761.0,133.6 763.0,134.1 765.0,131.9 767.0,132.6 769.0,131.9 771.0,134.2 773.0,133.8 775.0,131.7 777.0,134.7 779.0,134.7 781.0,133.7 783.0,133.6 785.0,132.1 787.0,131.6 789.0,133.3 791.0,131.8 793.0,132.2 795.0,132.4 797.0,131.7 799.0,133.1 801.0,133.0 803.0,134.3 805.0,133.3 807.0,133.6 809.0,133.2 811.0,133.7 813.0,133.1 815.0,132.5 817.0,134.8 819.0,134.8 821.0,134.3 823.0,133.9 825.0,132.6 827.0,132.3 829.0,132.5 831.0,131.8 833.0,134.1 835.0,132.9 837.0,134.3 839.0,132.8 841.0,134.7 843.0,134.3 845.0,131.6 847.0,132.3 849.0,134.5 851.0,133.1 853.0,134.7 855.0,132.9 857.0,131.8 859.0,133.6 861.0,134.1 863.0,132.5 865.0,131.9 867.0,132.7 869.0,134.7 871.0,134.0 873.0,132.0 875.0,132.4 877.0,131.9 879.0,131.8 881.0,134.2 883.0,132.2 885.0,133.4 887.0,133.0 889.0,132.2 891.0,133.9 893.0,132.0 895.0,133.7 897.0,132.0 899.0,132.9 901.0,132.3 903.0,132.5 905.0,134.7 907.0,134.2 909.0,132.6 911.0,134.4 913.0,132.3 915.0,132.9 917.0,134.3 919.0,133.7 921.0,131.9 923.0,134.8 925.0,132.3 927.0,132.4 929.0,134.1 931.0,132.7 933.0,132.5 935.0,131.8 937.0,131.9 939.0,133.5 941.0,132.2' fill='none' stroke='#1010d0' stroke-width='1.2'/><rect x='544.5' y='130.1' width='5' height='5' fill='none' stroke='#1818e0' stroke-width='1'/><rect x='742.5' y='130.5' width='5' height='5' fill='none' stroke='#1818e0' stroke-width='1'/><rect x='744.5' y='130.9' width='5' height='5' fill='none' stroke='#1818e0' stroke-width='1'/><rect x='746.5' y='132.1' width='5' height='5' fill='none' stroke='#1818e0' stroke-width='1'/><rect x='748.5' y='130.6' width='5' height='5' fill='none' stroke='#1818e0' stroke-width='1'/><rect x='750.5' y='130.7' width='5' height='5' fill='none' stroke='#1818e0' stroke-width='1'/><rect x='752.5' y='131.0' width='5' height='5' fill='none' stroke='#1818e0' stroke-width='1'/><rect x='754.5' y='129.7' width='5' height='5' fill='none' stroke='#1818e0' stroke-width='1'/><rect x='756.5' y='130.7' width='5' height='5' fill='none' stroke='#1818e0' stroke-width='1'/><rect x='758.5' y='131.1' width='5' height='5' fill='none' stroke='#1818e0' stroke-width='1'/><rect x='760.5' y='131.6' width='5' height='5' fill='none' stroke='#1818e0' stroke-width='1'/><rect x='762.5' y='129.4' width='5' height='5' fill='none' stroke='#1818e0' stroke-width='1'/><rect x='764.5' y='130.1' width='5' height='5' fill='none' stroke='#1818e0' stroke-width='1'/><rect x='766.5' y='129.4' width='5' height='5' fill='none' stroke='#1818e0' stroke-width='1'/><rect x='768.5' y='131.7' width='5' height='5' fill='none' stroke='#1818e0' stroke-width='1'/><rect x='770.5' y='131.3' width='5' height='5' fill='none' stroke='#1818e0' stroke-width='1'/><rect x='772.5' y='129.2' width='5' height='5' fill='none' stroke='#1818e0' stroke-width='1'/><rect x='774.5' y='132.2' width='5' height='5' fill='none' stroke='#1818e0' stroke-width='1'/><rect x='776.5' y='132.2' width='5' height='5' fill='none' stroke='#1818e0' stroke-width='1'/><rect x='778.5' y='131.2' width='5' height='5' fill='none' stroke='#1818e0' stroke-width='1'/><rect x='780.5' y='131.1' width='5' height='5' fill='none' stroke='#1818e0' stroke-width='1'/><rect x='782.5' y='129.6' width='5' height='5' fill='none' stroke='#1818e0' stroke-width='1'/><rect x='784.5' y='129.1' width='5' height='5' fill='none' stroke='#1818e0' stroke-width='1'/><rect x='786.5' y='130.8' width='5' height='5' fill='none' stroke='#1818e0' stroke-width='1'/><rect x='788.5' y='129.3' width='5' height='5' fill='none' stroke='#1818e0' stroke-width='1'/><rect x='790.5' y='129.7' width='5' height='5' fill='none' stroke='#1818e0' stroke-width='1'/><rect x='792.5' y='129.9' width='5' height='5' fill='none' stroke='#1818e0' stroke-width='1'/><rect x='794.5' y='129.2' width='5' height='5' fill='none' stroke='#1818e0' stroke-width='1'/><rect x='796.5' y='130.6' width='5' height='5' fill='none' stroke='#1818e0' stroke-width='1'/><rect x='798.5' y='130.5' width='5' height='5' fill='none' stroke='#1818e0' stroke-width='1'/><rect x='800.5' y='131.8' width='5' height='5' fill='none' stroke='#1818e0' stroke-width='1'/><rect x='802.5' y='130.8' width='5' height='5' fill='none' stroke='#1818e0' stroke-width='1'/><rect x='804.5' y='131.1' width='5' height='5' fill='none' stroke='#1818e0' stroke-width='1'/><rect x='806.5' y='130.7' width='5' height='5' fill='none' stroke='#1818e0' stroke-width='1'/><rect x='808.5' y='131.2' width='5' height='5' fill='none' stroke='#1818e0' stroke-width='1'/><rect x='810.5' y='130.6' width='5' height='5' fill='none' stroke='#1818e0' stroke-width='1'/><rect x='812.5' y='130.0' width='5' height='5' fill='none' stroke='#1818e0' stroke-width='1'/><rect x='814.5' y='132.3' width='5' height='5' fill='none' stroke='#1818e0' stroke-width='1'/><rect x='816.5' y='132.3' width='5' height='5' fill='none' stroke='#1818e0' stroke-width='1'/><rect x='818.5' y='131.8' width='5' height='5' fill='none' stroke='#1818e0' stroke-width='1'/><rect x='820.5' y='131.4' width='5' height='5' fill='none' stroke='#1818e0' stroke-width='1'/><rect x='822.5' y='130.1' width='5' height='5' fill='none' stroke='#1818e0' stroke-width='1'/><rect x='824.5' y='129.8' width='5' height='5' fill='none' stroke='#1818e0' stroke-width='1'/><rect x='826.5' y='130.0' width='5' height='5' fill='none' stroke='#1818e0' stroke-width='1'/><rect x='828.5' y='129.3' width='5' height='5' fill='none' stroke='#1818e0' stroke-width='1'/><rect x='830.5' y='131.6' width='5' height='5' fill='none' stroke='#1818e0' stroke-width='1'/><rect x='832.5' y='130.4' width='5' height='5' fill='none' stroke='#1818e0' stroke-width='1'/><rect x='834.5' y='131.8' width='5' height='5' fill='none' stroke='#1818e0' stroke-width='1'/><rect x='836.5' y='130.3' width='5' height='5' fill='none' stroke='#1818e0' stroke-width='1'/><rect x='838.5' y='132.2' width='5' height='5' fill='none' stroke='#1818e0' stroke-width='1'/><rect x='840.5' y='131.8' width='5' height='5' fill='none' stroke='#1818e0' stroke-width='1'/><rect x='842.5' y='129.1' width='5' height='5' fill='none' stroke='#1818e0' stroke-width='1'/><rect x='844.5' y='129.8' width='5' height='5' fill='none' stroke='#1818e0' stroke-width='1'/><rect x='846.5' y='132.0' width='5' height='5' fill='none' stroke='#1818e0' stroke-width='1'/><rect x='848.5' y='130.6' width='5' height='5' fill='none' stroke='#1818e0' stroke-width='1'/><rect x='850.5' y='132.2' width='5' height='5' fill='none' stroke='#1818e0' stroke-width='1'/><rect x='852.5' y='130.4' width='5' height='5' fill='none' stroke='#1818e0' stroke-width='1'/><rect x='854.5' y='129.3' width='5' height='5' fill='none' stroke='#1818e0' stroke-width='1'/><rect x='856.5' y='131.1' width='5' height='5' fill='none' stroke='#1818e0' stroke-width='1'/><rect x='858.5' y='131.6' width='5' height='5' fill='none' stroke='#1818e0' stroke-width='1'/><rect x='860.5' y='130.0' width='5' height='5' fill='none' stroke='#1818e0' stroke-width='1'/><rect x='862.5' y='129.4' width='5' height='5' fill='none' stroke='#1818e0' stroke-width='1'/><rect x='864.5' y='130.2' width='5' height='5' fill='none' stroke='#1818e0' stroke-width='1'/><rect x='866.5' y='132.2' width='5' height='5' fill='none' stroke='#1818e0' stroke-width='1'/><rect x='868.5' y='131.5' width='5' height='5' fill='none' stroke='#1818e0' stroke-width='1'/><rect x='870.5' y='129.5' width='5' height='5' fill='none' stroke='#1818e0' stroke-width='1'/><rect x='872.5' y='129.9' width='5' height='5' fill='none' stroke='#1818e0' stroke-width='1'/><rect x='874.5' y='129.4' width='5' height='5' fill='none' stroke='#1818e0' stroke-width='1'/><rect x='876.5' y='129.3' width='5' height='5' fill='none' stroke='#1818e0' stroke-width='1'/><rect x='878.5' y='131.7' width='5' height='5' fill='none' stroke='#1818e0' stroke-width='1'/><rect x='880.5' y='129.7' width='5' height='5' fill='none' stroke='#1818e0' stroke-width='1'/><rect x='882.5' y='130.9' width='5' height='5' fill='none' stroke='#1818e0' stroke-width='1'/><rect x='884.5' y='130.5' width='5' height='5' fill='none' stroke='#1818e0' stroke-width='1'/><rect x='886.5' y='129.7' width='5' height='5' fill='none' stroke='#1818e0' stroke-width='1'/><rect x='888.5' y='131.4' width='5' height='5' fill='none' stroke='#1818e0' stroke-width='1'/><rect x='890.5' y='129.5' width='5' height='5' fill='none' stroke='#1818e0' stroke-width='1'/><rect x='892.5' y='131.2' width='5' height='5' fill='none' stroke='#1818e0' stroke-width='1'/><rect x='894.5' y='129.5' width='5' height='5' fill='none' stroke='#1818e0' stroke-width='1'/><rect x='896.5' y='130.4' width='5' height='5' fill='none' stroke='#1818e0' stroke-width='1'/><rect x='898.5' y='129.8' width='5' height='5' fill='none' stroke='#1818e0' stroke-width='1'/><rect x='900.5' y='130.0' width='5' height='5' fill='none' stroke='#1818e0' stroke-width='1'/><rect x='902.5' y='132.2' width='5' height='5' fill='none' stroke='#1818e0' stroke-width='1'/><rect x='904.5' y='131.7' width='5' height='5' fill='none' stroke='#1818e0' stroke-width='1'/><rect x='906.5' y='130.1' width='5' height='5' fill='none' stroke='#1818e0' stroke-width='1'/><rect x='908.5' y='131.9' width='5' height='5' fill='none' stroke='#1818e0' stroke-width='1'/><rect x='910.5' y='129.8' width='5' height='5' fill='none' stroke='#1818e0' stroke-width='1'/><rect x='912.5' y='130.4' width='5' height='5' fill='none' stroke='#1818e0' stroke-width='1'/><rect x='914.5' y='131.8' width='5' height='5' fill='none' stroke='#1818e0' stroke-width='1'/><rect x='916.5' y='131.2' width='5' height='5' fill='none' stroke='#1818e0' stroke-width='1'/><rect x='918.5' y='129.4' width='5' height='5' fill='none' stroke='#1818e0' stroke-width='1'/><rect x='920.5' y='132.3' width='5' height='5' fill='none' stroke='#1818e0' stroke-width='1'/><rect x='922.5' y='129.8' width='5' height='5' fill='none' stroke='#1818e0' stroke-width='1'/><rect x='924.5' y='129.9' width='5' height='5' fill='none' stroke='#1818e0' stroke-width='1'/><rect x='926.5' y='131.6' width='5' height='5' fill='none' stroke='#1818e0' stroke-width='1'/><rect x='928.5' y='130.2' width='5' height='5' fill='none' stroke='#1818e0' stroke-width='1'/><rect x='930.5' y='130.0' width='5' height='5' fill='none' stroke='#1818e0' stroke-width='1'/><rect x='932.5' y='129.3' width='5' height='5' fill='none' stroke='#1818e0' stroke-width='1'/><rect x='934.5' y='129.4' width='5' height='5' fill='none' stroke='#1818e0' stroke-width='1'/><rect x='936.5' y='131.0' width='5' height='5' fill='none' stroke='#1818e0' stroke-width='1'/><rect x='938.5' y='129.7' width='5' height='5' fill='none' stroke='#1818e0' stroke-width='1'/><text x='546.0' y='59' font-family='Liberation Sans,sans-serif' font-size='11' fill='#111'>Axe Alpha</text><line x1='857.6' x2='941.3' y1='39.5' y2='39.5' stroke='#d01818' stroke-width='1'/><circle cx='899.4' cy='39.5' r='2.8' fill='#fff' stroke='#c81010' stroke-width='1'/><text x='941.3' y='59' text-anchor='end' textLength='83.7' lengthAdjust='spacingAndGlyphs' font-family='Liberation Sans,sans-serif' font-size='11' fill='#111'>Err Alpha (pixels)</text><line x1='766.3' x2='847.6' y1='39.5' y2='39.5' stroke='#1010c0' stroke-width='1'/><rect x='804.5' y='36.5' width='5' height='5' fill='#fff' stroke='#1818d0' stroke-width='1'/><text x='847.6' y='59' text-anchor='end' textLength='81.3' lengthAdjust='spacingAndGlyphs' font-family='Liberation Sans,sans-serif' font-size='11' fill='#111'>Corr Alpha (sec)</text><text x='743.7' y='265.7' text-anchor='middle' font-family='Liberation Sans,sans-serif' font-size='11' fill='#111'>Temps (Min)</text><text x='959.0' y='100.5' text-anchor='middle' font-family='Liberation Sans,sans-serif' font-size='11' fill='#111'>P</text><text x='959.0' y='110.5' text-anchor='middle' font-family='Liberation Sans,sans-serif' font-size='11' fill='#111'>i</text><text x='959.0' y='120.6' text-anchor='middle' font-family='Liberation Sans,sans-serif' font-size='11' fill='#111'>x</text><text x='959.0' y='130.7' text-anchor='middle' font-family='Liberation Sans,sans-serif' font-size='11' fill='#111'>e</text><text x='959.0' y='140.7' text-anchor='middle' font-family='Liberation Sans,sans-serif' font-size='11' fill='#111'>l</text><text x='959.0' y='160.8' text-anchor='middle' font-family='Liberation Sans,sans-serif' font-size='11' fill='#111'>e</text><text x='959.0' y='170.9' text-anchor='middle' font-family='Liberation Sans,sans-serif' font-size='11' fill='#111'>t</text><text x='959.0' y='190.9' text-anchor='middle' font-family='Liberation Sans,sans-serif' font-size='11' fill='#111'>s</text><text x='959.0' y='201.0' text-anchor='middle' font-family='Liberation Sans,sans-serif' font-size='11' fill='#111'>e</text><text x='959.0' y='211.1' text-anchor='middle' font-family='Liberation Sans,sans-serif' font-size='11' fill='#111'>c</text></svg><div class='rb f' style='left:495px;top:280.5px;width:73px;height:19.5px;'></div><div class='t c ' style='left:491.5px;width:80px;top:283.5px;'>Réglages</div><div class='ct' style='left:495px;top:306px;color:#eee;font-family:"DejaVu Sans Condensed",sans-serif;font-size:10.5px;letter-spacing:-.1px'>495x252</div><div class='a' style='left:490px;top:331px;width:496px;height:328px;background:#0a0000'></div><div class='a' style='left:490px;top:331px;width:496px;height:28px;background:linear-gradient(90deg,rgba(0,0,0,0) 0%,rgba(0,0,0,.5) 100%),linear-gradient(#320404,#1a0000 60%,#0b0000);border-radius:5px 0 0 0'></div><div class='a' style='left:497px;top:358.5px;width:489px;height:253.5px;background:#000'></div><div class='a' style='left:497.7px;top:359.5px;width:488.3px;height:251.5px;background:#fff'></div><div class='a' style='left:498.7px;top:360.5px;width:487.3px;height:249.79999999999995px;background:#000'></div><div class='a' style='left:497px;top:612px;width:489px;height:26.5px;background:#222'></div><div class='a' style='left:497px;top:638.5px;width:489px;height:20.5px;background:linear-gradient(#4c4c4c,#383838)'></div><div class='a' style='left:644px;top:639px;width:2px;height:20px;background:#2a2a2a;border-right:1px solid #4a4a4a'></div><div class='tt' style='left:515.4px;top:338.5px;color:#fff;letter-spacing:0'>Axe Delta</div><svg class='a' style='left:494.7px;top:336.8px' width='16' height='16' viewBox='-8 -8 16 16'><polygon points='0.00,-6.60 1.49,-3.60 4.67,-4.67 3.60,-1.49 6.60,0.00 3.60,1.49 4.67,4.67 1.49,3.60 0.00,6.60 -1.49,3.60 -4.67,4.67 -3.60,1.49 -6.60,0.00 -3.60,-1.49 -4.67,-4.67 -1.49,-3.60' fill='#e4e4e4' stroke='#1a1a1a' stroke-width='1.2' paint-order='stroke'/><circle r='2.6' fill='#555'/><circle r='1.3' fill='#222'/><circle r='3.3' fill='none' stroke='#fff' stroke-width='.8'/></svg><div class='a' style='left:959.5px;top:335.5px;width:17.0px;height:17.0px;background:linear-gradient(#ee1c1c,#c00808);border:1px solid #e84040;border-radius:3px'></div><div class='a' style='left:966px;top:347px;width:5.5px;height:2px;background:#fff'></div><div class='a' style='left:978px;top:335.5px;width:17px;height:17.0px;background:linear-gradient(#ee1c1c,#c00808);border:1px solid #e84040;border-radius:3px'></div><svg class='a' style='left:978px;top:335px' width='8' height='18'><path d='M6 5.5L12 12.5M12 5.5L6 12.5' stroke='#fff' stroke-width='1.8'/></svg><div class='a' style='left:499.7px;top:361.6px;width:486.3px;height:248.0px;background:#fff'></div><svg class='a' style='left:500px;top:362px' width='486' height='247' viewBox='500 362 486 247'><rect x='500' y='362' width='486' height='247' fill='#fff'/><line x1='548.5' x2='943.5' y1='413.5' y2='413.5' stroke='#9c9c9c' stroke-width='1'/><line x1='548.5' x2='943.5' y1='447.5' y2='447.5' stroke='#9c9c9c' stroke-width='1'/><line x1='548.5' x2='943.5' y1='481.5' y2='481.5' stroke='#9c9c9c' stroke-width='1'/><line x1='548.5' x2='943.5' y1='515.5' y2='515.5' stroke='#9c9c9c' stroke-width='1'/><line x1='548.5' x2='943.5' y1='549.5' y2='549.5' stroke='#9c9c9c' stroke-width='1'/><line x1='715.5' x2='715.5' y1='410.5' y2='562.3' stroke='#9c9c9c' stroke-width='1'/><line x1='881.5' x2='881.5' y1='410.5' y2='562.3' stroke='#9c9c9c' stroke-width='1'/><line x1='544.5' x2='548.5' y1='562.6' y2='562.6' stroke='#000' stroke-width='1.05'/><line x1='544.5' x2='548.5' y1='559.2' y2='559.2' stroke='#000' stroke-width='1.05'/><line x1='544.5' x2='548.5' y1='555.8' y2='555.8' stroke='#000' stroke-width='1.05'/><line x1='544.5' x2='548.5' y1='552.4' y2='552.4' stroke='#000' stroke-width='1.05'/><line x1='539.5' x2='548.5' y1='549.0' y2='549.0' stroke='#000' stroke-width='1.4'/><line x1='544.5' x2='548.5' y1='545.6' y2='545.6' stroke='#000' stroke-width='1.05'/><line x1='544.5' x2='548.5' y1='542.2' y2='542.2' stroke='#000' stroke-width='1.05'/><line x1='544.5' x2='548.5' y1='538.8' y2='538.8' stroke='#000' stroke-width='1.05'/><line x1='544.5' x2='548.5' y1='535.4' y2='535.4' stroke='#000' stroke-width='1.05'/><line x1='544.5' x2='548.5' y1='532.0' y2='532.0' stroke='#000' stroke-width='1.05'/><line x1='544.5' x2='548.5' y1='528.6' y2='528.6' stroke='#000' stroke-width='1.05'/><line x1='544.5' x2='548.5' y1='525.2' y2='525.2' stroke='#000' stroke-width='1.05'/><line x1='544.5' x2='548.5' y1='521.8' y2='521.8' stroke='#000' stroke-width='1.05'/><line x1='544.5' x2='548.5' y1='518.4' y2='518.4' stroke='#000' stroke-width='1.05'/><line x1='539.5' x2='548.5' y1='515.0' y2='515.0' stroke='#000' stroke-width='1.4'/><line x1='544.5' x2='548.5' y1='511.6' y2='511.6' stroke='#000' stroke-width='1.05'/><line x1='544.5' x2='548.5' y1='508.2' y2='508.2' stroke='#000' stroke-width='1.05'/><line x1='544.5' x2='548.5' y1='504.8' y2='504.8' stroke='#000' stroke-width='1.05'/><line x1='544.5' x2='548.5' y1='501.4' y2='501.4' stroke='#000' stroke-width='1.05'/><line x1='544.5' x2='548.5' y1='498.0' y2='498.0' stroke='#000' stroke-width='1.05'/><line x1='544.5' x2='548.5' y1='494.6' y2='494.6' stroke='#000' stroke-width='1.05'/><line x1='544.5' x2='548.5' y1='491.2' y2='491.2' stroke='#000' stroke-width='1.05'/><line x1='544.5' x2='548.5' y1='487.8' y2='487.8' stroke='#000' stroke-width='1.05'/><line x1='544.5' x2='548.5' y1='484.4' y2='484.4' stroke='#000' stroke-width='1.05'/><line x1='539.5' x2='548.5' y1='481.0' y2='481.0' stroke='#000' stroke-width='1.4'/><line x1='544.5' x2='548.5' y1='477.6' y2='477.6' stroke='#000' stroke-width='1.05'/><line x1='544.5' x2='548.5' y1='474.2' y2='474.2' stroke='#000' stroke-width='1.05'/><line x1='544.5' x2='548.5' y1='470.8' y2='470.8' stroke='#000' stroke-width='1.05'/><line x1='544.5' x2='548.5' y1='467.4' y2='467.4' stroke='#000' stroke-width='1.05'/><line x1='544.5' x2='548.5' y1='464.0' y2='464.0' stroke='#000' stroke-width='1.05'/><line x1='544.5' x2='548.5' y1='460.6' y2='460.6' stroke='#000' stroke-width='1.05'/><line x1='544.5' x2='548.5' y1='457.2' y2='457.2' stroke='#000' stroke-width='1.05'/><line x1='544.5' x2='548.5' y1='453.8' y2='453.8' stroke='#000' stroke-width='1.05'/><line x1='544.5' x2='548.5' y1='450.4' y2='450.4' stroke='#000' stroke-width='1.05'/><line x1='539.5' x2='548.5' y1='447.0' y2='447.0' stroke='#000' stroke-width='1.4'/><line x1='544.5' x2='548.5' y1='443.6' y2='443.6' stroke='#000' stroke-width='1.05'/><line x1='544.5' x2='548.5' y1='440.2' y2='440.2' stroke='#000' stroke-width='1.05'/><line x1='544.5' x2='548.5' y1='436.8' y2='436.8' stroke='#000' stroke-width='1.05'/><line x1='544.5' x2='548.5' y1='433.4' y2='433.4' stroke='#000' stroke-width='1.05'/><line x1='544.5' x2='548.5' y1='430.0' y2='430.0' stroke='#000' stroke-width='1.05'/><line x1='544.5' x2='548.5' y1='426.6' y2='426.6' stroke='#000' stroke-width='1.05'/><line x1='544.5' x2='548.5' y1='423.2' y2='423.2' stroke='#000' stroke-width='1.05'/><line x1='544.5' x2='548.5' y1='419.8' y2='419.8' stroke='#000' stroke-width='1.05'/><line x1='544.5' x2='548.5' y1='416.4' y2='416.4' stroke='#000' stroke-width='1.05'/><line x1='539.5' x2='548.5' y1='413.0' y2='413.0' stroke='#000' stroke-width='1.4'/><line x1='548.8' x2='548.8' y1='562.3' y2='572.0' stroke='#000' stroke-width='1.3'/><text x='548.8' y='585.8' text-anchor='middle' font-family='Liberation Sans,sans-serif' font-size='11' fill='#111'>0</text><line x1='565.4' x2='565.4' y1='562.3' y2='567.0999999999999' stroke='#000' stroke-width='1.3'/><line x1='582.0' x2='582.0' y1='562.3' y2='567.0999999999999' stroke='#000' stroke-width='1.3'/><line x1='598.7' x2='598.7' y1='562.3' y2='567.0999999999999' stroke='#000' stroke-width='1.3'/><line x1='615.3' x2='615.3' y1='562.3' y2='567.0999999999999' stroke='#000' stroke-width='1.3'/><line x1='631.9' x2='631.9' y1='562.3' y2='567.0999999999999' stroke='#000' stroke-width='1.3'/><line x1='648.5' x2='648.5' y1='562.3' y2='567.0999999999999' stroke='#000' stroke-width='1.3'/><line x1='665.1' x2='665.1' y1='562.3' y2='567.0999999999999' stroke='#000' stroke-width='1.3'/><line x1='681.8' x2='681.8' y1='562.3' y2='567.0999999999999' stroke='#000' stroke-width='1.3'/><line x1='698.4' x2='698.4' y1='562.3' y2='567.0999999999999' stroke='#000' stroke-width='1.3'/><line x1='715.0' x2='715.0' y1='562.3' y2='572.0' stroke='#000' stroke-width='1.3'/><text x='715.0' y='585.8' text-anchor='middle' font-family='Liberation Sans,sans-serif' font-size='11' fill='#111'>10</text><line x1='731.6' x2='731.6' y1='562.3' y2='567.0999999999999' stroke='#000' stroke-width='1.3'/><line x1='748.2' x2='748.2' y1='562.3' y2='567.0999999999999' stroke='#000' stroke-width='1.3'/><line x1='764.9' x2='764.9' y1='562.3' y2='567.0999999999999' stroke='#000' stroke-width='1.3'/><line x1='781.5' x2='781.5' y1='562.3' y2='567.0999999999999' stroke='#000' stroke-width='1.3'/><line x1='798.1' x2='798.1' y1='562.3' y2='567.0999999999999' stroke='#000' stroke-width='1.3'/><line x1='814.7' x2='814.7' y1='562.3' y2='567.0999999999999' stroke='#000' stroke-width='1.3'/><line x1='831.3' x2='831.3' y1='562.3' y2='567.0999999999999' stroke='#000' stroke-width='1.3'/><line x1='848.0' x2='848.0' y1='562.3' y2='567.0999999999999' stroke='#000' stroke-width='1.3'/><line x1='864.6' x2='864.6' y1='562.3' y2='567.0999999999999' stroke='#000' stroke-width='1.3'/><line x1='881.2' x2='881.2' y1='562.3' y2='572.0' stroke='#000' stroke-width='1.3'/><text x='881.2' y='585.8' text-anchor='middle' font-family='Liberation Sans,sans-serif' font-size='11' fill='#111'>20</text><line x1='897.8' x2='897.8' y1='562.3' y2='567.0999999999999' stroke='#000' stroke-width='1.3'/><line x1='914.4' x2='914.4' y1='562.3' y2='567.0999999999999' stroke='#000' stroke-width='1.3'/><line x1='931.1' x2='931.1' y1='562.3' y2='567.0999999999999' stroke='#000' stroke-width='1.3'/><text x='533.5' y='417.1' text-anchor='end' font-family='Liberation Sans,sans-serif' font-size='11' fill='#111'>2</text><text x='533.5' y='451.1' text-anchor='end' font-family='Liberation Sans,sans-serif' font-size='11' fill='#111'>1</text><text x='533.5' y='485.1' text-anchor='end' font-family='Liberation Sans,sans-serif' font-size='11' fill='#111'>0</text><text x='533.5' y='519.1' text-anchor='end' font-family='Liberation Sans,sans-serif' font-size='11' fill='#111'>-1</text><text x='533.5' y='553.1' text-anchor='end' font-family='Liberation Sans,sans-serif' font-size='11' fill='#111'>-2</text><rect x='548.5' y='410.5' width='395.0' height='151.79999999999995' fill='none' stroke='#000' stroke-width='1.1'/><path d='M548.5 410.0V562.3H944.0' fill='none' stroke='#000' stroke-width='1.7'/><line x1='548.5' x2='943.5' y1='481.8' y2='481.8' stroke='#e02020' stroke-width='1.3' stroke-dasharray='7.5 6 3 6'/><polyline points='548.8,467.4 747.2,467.4 749.1,489.3 751.3,537.2 753.2,515.3 755.4,498.3 757.3,449.1 759.5,541.3 761.4,498.9 763.4,455.7 765.5,475.1 769.6,465.5 773.2,511.7 775.1,497.5 777.3,492.9 779.2,510.4 781.1,503.5 783.3,482.5 785.5,456.5 787.4,464.7 789.3,488.5 793.4,505.2 795.6,489.3 799.2,494.8 801.6,490.1 803.3,487.9 805.2,497.5 809.3,476.2 811.2,489.3 813.4,498.9 815.3,487.4 817.5,455.7 819.4,498.3 821.6,451.0 825.1,445.0 827.3,488.5 831.1,471.0 833.3,452.4 839.3,509.3 841.5,475.6 846.2,496.7 848.1,514.7 850.1,505.7 852.3,501.1 854.2,482.5 856.4,479.7 861.3,460.1 863.2,465.5 865.4,466.6 868.2,525.7 870.1,528.4 872.3,497.5 874.4,476.5 876.9,458.4 879.6,442.3 881.6,474.8 883.7,487.9 885.9,506.5 890.0,438.7 891.9,437.4 893.9,444.2 896.0,410.0 898.2,465.5 900.1,460.6 902.1,450.5 905.6,465.5 907.5,465.5 909.7,464.7 911.6,449.1 913.3,466.6 915.7,490.7 917.9,487.9 919.8,490.7 923.9,475.6 926.1,520.2 927.5,521.3 929.7,536.3 931.6,536.6 933.8,561.8 935.7,543.4 937.0,549.5 939.8,529.0 941.7,479.7 943.9,470.2' fill='none' stroke='#e00808' stroke-width='1.05'/><circle cx='548.8' cy='467.4' r='3.1' fill='none' stroke='#d00808' stroke-width='1'/><circle cx='747.2' cy='467.4' r='3.1' fill='none' stroke='#d00808' stroke-width='1'/><circle cx='749.1' cy='489.3' r='3.1' fill='none' stroke='#d00808' stroke-width='1'/><circle cx='751.3' cy='537.2' r='3.1' fill='none' stroke='#d00808' stroke-width='1'/><circle cx='753.2' cy='515.3' r='3.1' fill='none' stroke='#d00808' stroke-width='1'/><circle cx='755.4' cy='498.3' r='3.1' fill='none' stroke='#d00808' stroke-width='1'/><circle cx='757.3' cy='449.1' r='3.1' fill='none' stroke='#d00808' stroke-width='1'/><circle cx='759.5' cy='541.3' r='3.1' fill='none' stroke='#d00808' stroke-width='1'/><circle cx='761.4' cy='498.9' r='3.1' fill='none' stroke='#d00808' stroke-width='1'/><circle cx='763.4' cy='455.7' r='3.1' fill='none' stroke='#d00808' stroke-width='1'/><circle cx='765.5' cy='475.1' r='3.1' fill='none' stroke='#d00808' stroke-width='1'/><circle cx='769.6' cy='465.5' r='3.1' fill='none' stroke='#d00808' stroke-width='1'/><circle cx='773.2' cy='511.7' r='3.1' fill='none' stroke='#d00808' stroke-width='1'/><circle cx='775.1' cy='497.5' r='3.1' fill='none' stroke='#d00808' stroke-width='1'/><circle cx='777.3' cy='492.9' r='3.1' fill='none' stroke='#d00808' stroke-width='1'/><circle cx='779.2' cy='510.4' r='3.1' fill='none' stroke='#d00808' stroke-width='1'/><circle cx='781.1' cy='503.5' r='3.1' fill='none' stroke='#d00808' stroke-width='1'/><circle cx='783.3' cy='482.5' r='3.1' fill='none' stroke='#d00808' stroke-width='1'/><circle cx='785.5' cy='456.5' r='3.1' fill='none' stroke='#d00808' stroke-width='1'/><circle cx='787.4' cy='464.7' r='3.1' fill='none' stroke='#d00808' stroke-width='1'/><circle cx='789.3' cy='488.5' r='3.1' fill='none' stroke='#d00808' stroke-width='1'/><circle cx='793.4' cy='505.2' r='3.1' fill='none' stroke='#d00808' stroke-width='1'/><circle cx='795.6' cy='489.3' r='3.1' fill='none' stroke='#d00808' stroke-width='1'/><circle cx='799.2' cy='494.8' r='3.1' fill='none' stroke='#d00808' stroke-width='1'/><circle cx='801.6' cy='490.1' r='3.1' fill='none' stroke='#d00808' stroke-width='1'/><circle cx='803.3' cy='487.9' r='3.1' fill='none' stroke='#d00808' stroke-width='1'/><circle cx='805.2' cy='497.5' r='3.1' fill='none' stroke='#d00808' stroke-width='1'/><circle cx='809.3' cy='476.2' r='3.1' fill='none' stroke='#d00808' stroke-width='1'/><circle cx='811.2' cy='489.3' r='3.1' fill='none' stroke='#d00808' stroke-width='1'/><circle cx='813.4' cy='498.9' r='3.1' fill='none' stroke='#d00808' stroke-width='1'/><circle cx='815.3' cy='487.4' r='3.1' fill='none' stroke='#d00808' stroke-width='1'/><circle cx='817.5' cy='455.7' r='3.1' fill='none' stroke='#d00808' stroke-width='1'/><circle cx='819.4' cy='498.3' r='3.1' fill='none' stroke='#d00808' stroke-width='1'/><circle cx='821.6' cy='451.0' r='3.1' fill='none' stroke='#d00808' stroke-width='1'/><circle cx='825.1' cy='445.0' r='3.1' fill='none' stroke='#d00808' stroke-width='1'/><circle cx='827.3' cy='488.5' r='3.1' fill='none' stroke='#d00808' stroke-width='1'/><circle cx='831.1' cy='471.0' r='3.1' fill='none' stroke='#d00808' stroke-width='1'/><circle cx='833.3' cy='452.4' r='3.1' fill='none' stroke='#d00808' stroke-width='1'/><circle cx='839.3' cy='509.3' r='3.1' fill='none' stroke='#d00808' stroke-width='1'/><circle cx='841.5' cy='475.6' r='3.1' fill='none' stroke='#d00808' stroke-width='1'/><circle cx='846.2' cy='496.7' r='3.1' fill='none' stroke='#d00808' stroke-width='1'/><circle cx='848.1' cy='514.7' r='3.1' fill='none' stroke='#d00808' stroke-width='1'/><circle cx='850.1' cy='505.7' r='3.1' fill='none' stroke='#d00808' stroke-width='1'/><circle cx='852.3' cy='501.1' r='3.1' fill='none' stroke='#d00808' stroke-width='1'/><circle cx='854.2' cy='482.5' r='3.1' fill='none' stroke='#d00808' stroke-width='1'/><circle cx='856.4' cy='479.7' r='3.1' fill='none' stroke='#d00808' stroke-width='1'/><circle cx='861.3' cy='460.1' r='3.1' fill='none' stroke='#d00808' stroke-width='1'/><circle cx='863.2' cy='465.5' r='3.1' fill='none' stroke='#d00808' stroke-width='1'/><circle cx='865.4' cy='466.6' r='3.1' fill='none' stroke='#d00808' stroke-width='1'/><circle cx='868.2' cy='525.7' r='3.1' fill='none' stroke='#d00808' stroke-width='1'/><circle cx='870.1' cy='528.4' r='3.1' fill='none' stroke='#d00808' stroke-width='1'/><circle cx='872.3' cy='497.5' r='3.1' fill='none' stroke='#d00808' stroke-width='1'/><circle cx='874.4' cy='476.5' r='3.1' fill='none' stroke='#d00808' stroke-width='1'/><circle cx='876.9' cy='458.4' r='3.1' fill='none' stroke='#d00808' stroke-width='1'/><circle cx='879.6' cy='442.3' r='3.1' fill='none' stroke='#d00808' stroke-width='1'/><circle cx='881.6' cy='474.8' r='3.1' fill='none' stroke='#d00808' stroke-width='1'/><circle cx='883.7' cy='487.9' r='3.1' fill='none' stroke='#d00808' stroke-width='1'/><circle cx='885.9' cy='506.5' r='3.1' fill='none' stroke='#d00808' stroke-width='1'/><circle cx='890.0' cy='438.7' r='3.1' fill='none' stroke='#d00808' stroke-width='1'/><circle cx='891.9' cy='437.4' r='3.1' fill='none' stroke='#d00808' stroke-width='1'/><circle cx='893.9' cy='444.2' r='3.1' fill='none' stroke='#d00808' stroke-width='1'/><circle cx='896.0' cy='410.0' r='3.1' fill='none' stroke='#d00808' stroke-width='1'/><circle cx='898.2' cy='465.5' r='3.1' fill='none' stroke='#d00808' stroke-width='1'/><circle cx='900.1' cy='460.6' r='3.1' fill='none' stroke='#d00808' stroke-width='1'/><circle cx='902.1' cy='450.5' r='3.1' fill='none' stroke='#d00808' stroke-width='1'/><circle cx='905.6' cy='465.5' r='3.1' fill='none' stroke='#d00808' stroke-width='1'/><circle cx='907.5' cy='465.5' r='3.1' fill='none' stroke='#d00808' stroke-width='1'/><circle cx='909.7' cy='464.7' r='3.1' fill='none' stroke='#d00808' stroke-width='1'/><circle cx='911.6' cy='449.1' r='3.1' fill='none' stroke='#d00808' stroke-width='1'/><circle cx='913.3' cy='466.6' r='3.1' fill='none' stroke='#d00808' stroke-width='1'/><circle cx='915.7' cy='490.7' r='3.1' fill='none' stroke='#d00808' stroke-width='1'/><circle cx='917.9' cy='487.9' r='3.1' fill='none' stroke='#d00808' stroke-width='1'/><circle cx='919.8' cy='490.7' r='3.1' fill='none' stroke='#d00808' stroke-width='1'/><circle cx='923.9' cy='475.6' r='3.1' fill='none' stroke='#d00808' stroke-width='1'/><circle cx='926.1' cy='520.2' r='3.1' fill='none' stroke='#d00808' stroke-width='1'/><circle cx='927.5' cy='521.3' r='3.1' fill='none' stroke='#d00808' stroke-width='1'/><circle cx='929.7' cy='536.3' r='3.1' fill='none' stroke='#d00808' stroke-width='1'/><circle cx='931.6' cy='536.6' r='3.1' fill='none' stroke='#d00808' stroke-width='1'/><circle cx='933.8' cy='561.8' r='3.1' fill='none' stroke='#d00808' stroke-width='1'/><circle cx='935.7' cy='543.4' r='3.1' fill='none' stroke='#d00808' stroke-width='1'/><circle cx='937.0' cy='549.5' r='3.1' fill='none' stroke='#d00808' stroke-width='1'/><circle cx='939.8' cy='529.0' r='3.1' fill='none' stroke='#d00808' stroke-width='1'/><circle cx='941.7' cy='479.7' r='3.1' fill='none' stroke='#d00808' stroke-width='1'/><circle cx='943.9' cy='470.2' r='3.1' fill='none' stroke='#d00808' stroke-width='1'/><polyline points='548.8,480.5 745.0,478.9 746.2,479.3 747.4,479.0 748.6,479.1 749.8,479.8 751.0,479.2 752.2,479.3 753.4,479.6 754.6,478.8 755.8,478.8 757.0,479.7 758.2,479.6 759.4,478.9 760.6,478.8 761.8,479.5 763.0,479.7 764.2,478.8 765.4,479.7 766.6,479.7 767.8,479.3 769.0,479.1 770.2,478.7 771.4,478.6 772.6,479.8 773.8,478.9 775.0,479.4 776.2,478.9 777.4,479.6 778.6,479.3 779.8,479.0 781.0,478.8 782.2,479.5 783.4,478.7 784.6,478.9 785.8,479.3 787.0,479.6 788.2,479.3 789.4,478.9 790.6,479.7 791.8,478.8 793.0,478.6 794.2,478.9 795.4,479.1 796.6,478.7 797.8,478.8 799.0,479.0 800.2,479.3 801.4,478.8 802.6,479.0 803.8,479.7 805.0,479.8 806.2,479.4 807.4,479.4 808.6,479.3 809.8,478.8 811.0,478.6 812.2,478.6 813.4,479.7 814.6,479.4 815.8,479.8 817.0,478.6 818.2,479.4 819.4,479.2 820.6,479.5 821.8,479.0 823.0,479.8 824.2,478.7 825.4,479.3 826.6,479.5 827.8,479.7 829.0,479.5 830.2,479.4 831.4,479.6 832.6,479.7 833.8,479.0 835.0,479.4 836.2,479.7 837.4,479.6 838.6,479.1 839.8,479.5 841.0,479.6 842.2,479.3 843.4,479.3 844.6,479.1 845.8,479.3 847.0,479.3 848.2,478.7 849.4,479.4 850.6,479.8 851.8,479.7 853.0,479.5 854.2,479.1 855.4,479.5 856.6,479.3 857.8,479.1 859.0,479.6 860.2,478.7 861.4,479.5 862.6,478.6 863.8,479.3 865.0,479.2 866.2,478.9 867.4,479.4 868.6,479.2 869.8,479.3 871.0,479.7 872.2,478.9 873.4,478.6 874.6,479.0 875.8,479.4 877.0,478.8 878.2,478.8 879.4,479.7 880.6,480.2 881.8,479.9 883.0,480.5 884.2,479.8 885.4,480.2 886.6,479.6 887.8,479.9 889.0,480.4 890.2,480.5 891.4,480.5 892.6,479.9 893.8,480.1 895.0,479.8 896.2,479.6 897.4,480.0 898.6,480.4 899.8,480.4 901.0,480.3 902.2,480.5 903.4,479.7 904.6,479.6 905.8,479.9 907.0,479.7 908.2,479.7 909.4,479.9 910.6,480.2 911.8,480.0 913.0,479.8 914.2,480.4 915.4,480.6 916.6,479.9 917.8,479.5 919.0,479.4 920.2,480.4 921.4,479.4 922.6,480.3 923.8,480.1 925.0,479.8 926.2,480.3 927.4,479.4 928.6,479.6 929.8,479.9 931.0,479.4 932.2,480.4 933.4,479.7 934.6,479.6 935.8,479.5 937.0,480.2 938.2,479.9 939.4,480.2 940.6,480.2 941.8,480.4 943.5,480.5' fill='none' stroke='#1010d0' stroke-width='1.2'/><rect x='546.3' y='478.0' width='5' height='5' fill='none' stroke='#1818e0' stroke-width='1'/><rect x='742.5' y='476.4' width='5' height='5' fill='none' stroke='#1818e0' stroke-width='1'/><rect x='743.7' y='476.8' width='5' height='5' fill='none' stroke='#1818e0' stroke-width='1'/><rect x='744.9' y='476.5' width='5' height='5' fill='none' stroke='#1818e0' stroke-width='1'/><rect x='746.1' y='476.6' width='5' height='5' fill='none' stroke='#1818e0' stroke-width='1'/><rect x='747.3' y='477.3' width='5' height='5' fill='none' stroke='#1818e0' stroke-width='1'/><rect x='748.5' y='476.7' width='5' height='5' fill='none' stroke='#1818e0' stroke-width='1'/><rect x='749.7' y='476.8' width='5' height='5' fill='none' stroke='#1818e0' stroke-width='1'/><rect x='750.9' y='477.1' width='5' height='5' fill='none' stroke='#1818e0' stroke-width='1'/><rect x='752.1' y='476.3' width='5' height='5' fill='none' stroke='#1818e0' stroke-width='1'/><rect x='753.3' y='476.3' width='5' height='5' fill='none' stroke='#1818e0' stroke-width='1'/><rect x='754.5' y='477.2' width='5' height='5' fill='none' stroke='#1818e0' stroke-width='1'/><rect x='755.7' y='477.1' width='5' height='5' fill='none' stroke='#1818e0' stroke-width='1'/><rect x='756.9' y='476.4' width='5' height='5' fill='none' stroke='#1818e0' stroke-width='1'/><rect x='758.1' y='476.3' width='5' height='5' fill='none' stroke='#1818e0' stroke-width='1'/><rect x='759.3' y='477.0' width='5' height='5' fill='none' stroke='#1818e0' stroke-width='1'/><rect x='760.5' y='477.2' width='5' height='5' fill='none' stroke='#1818e0' stroke-width='1'/><rect x='761.7' y='476.3' width='5' height='5' fill='none' stroke='#1818e0' stroke-width='1'/><rect x='762.9' y='477.2' width='5' height='5' fill='none' stroke='#1818e0' stroke-width='1'/><rect x='764.1' y='477.2' width='5' height='5' fill='none' stroke='#1818e0' stroke-width='1'/><rect x='765.3' y='476.8' width='5' height='5' fill='none' stroke='#1818e0' stroke-width='1'/><rect x='766.5' y='476.6' width='5' height='5' fill='none' stroke='#1818e0' stroke-width='1'/><rect x='767.7' y='476.2' width='5' height='5' fill='none' stroke='#1818e0' stroke-width='1'/><rect x='768.9' y='476.1' width='5' height='5' fill='none' stroke='#1818e0' stroke-width='1'/><rect x='770.1' y='477.3' width='5' height='5' fill='none' stroke='#1818e0' stroke-width='1'/><rect x='771.3' y='476.4' width='5' height='5' fill='none' stroke='#1818e0' stroke-width='1'/><rect x='772.5' y='476.9' width='5' height='5' fill='none' stroke='#1818e0' stroke-width='1'/><rect x='773.7' y='476.4' width='5' height='5' fill='none' stroke='#1818e0' stroke-width='1'/><rect x='774.9' y='477.1' width='5' height='5' fill='none' stroke='#1818e0' stroke-width='1'/><rect x='776.1' y='476.8' width='5' height='5' fill='none' stroke='#1818e0' stroke-width='1'/><rect x='777.3' y='476.5' width='5' height='5' fill='none' stroke='#1818e0' stroke-width='1'/><rect x='778.5' y='476.3' width='5' height='5' fill='none' stroke='#1818e0' stroke-width='1'/><rect x='779.7' y='477.0' width='5' height='5' fill='none' stroke='#1818e0' stroke-width='1'/><rect x='780.9' y='476.2' width='5' height='5' fill='none' stroke='#1818e0' stroke-width='1'/><rect x='782.1' y='476.4' width='5' height='5' fill='none' stroke='#1818e0' stroke-width='1'/><rect x='783.3' y='476.8' width='5' height='5' fill='none' stroke='#1818e0' stroke-width='1'/><rect x='784.5' y='477.1' width='5' height='5' fill='none' stroke='#1818e0' stroke-width='1'/><rect x='785.7' y='476.8' width='5' height='5' fill='none' stroke='#1818e0' stroke-width='1'/><rect x='786.9' y='476.4' width='5' height='5' fill='none' stroke='#1818e0' stroke-width='1'/><rect x='788.1' y='477.2' width='5' height='5' fill='none' stroke='#1818e0' stroke-width='1'/><rect x='789.3' y='476.3' width='5' height='5' fill='none' stroke='#1818e0' stroke-width='1'/><rect x='790.5' y='476.1' width='5' height='5' fill='none' stroke='#1818e0' stroke-width='1'/><rect x='791.7' y='476.4' width='5' height='5' fill='none' stroke='#1818e0' stroke-width='1'/><rect x='792.9' y='476.6' width='5' height='5' fill='none' stroke='#1818e0' stroke-width='1'/><rect x='794.1' y='476.2' width='5' height='5' fill='none' stroke='#1818e0' stroke-width='1'/><rect x='795.3' y='476.3' width='5' height='5' fill='none' stroke='#1818e0' stroke-width='1'/><rect x='796.5' y='476.5' width='5' height='5' fill='none' stroke='#1818e0' stroke-width='1'/><rect x='797.7' y='476.8' width='5' height='5' fill='none' stroke='#1818e0' stroke-width='1'/><rect x='798.9' y='476.3' width='5' height='5' fill='none' stroke='#1818e0' stroke-width='1'/><rect x='800.1' y='476.5' width='5' height='5' fill='none' stroke='#1818e0' stroke-width='1'/><rect x='801.3' y='477.2' width='5' height='5' fill='none' stroke='#1818e0' stroke-width='1'/><rect x='802.5' y='477.3' width='5' height='5' fill='none' stroke='#1818e0' stroke-width='1'/><rect x='803.7' y='476.9' width='5' height='5' fill='none' stroke='#1818e0' stroke-width='1'/><rect x='804.9' y='476.9' width='5' height='5' fill='none' stroke='#1818e0' stroke-width='1'/><rect x='806.1' y='476.8' width='5' height='5' fill='none' stroke='#1818e0' stroke-width='1'/><rect x='807.3' y='476.3' width='5' height='5' fill='none' stroke='#1818e0' stroke-width='1'/><rect x='808.5' y='476.1' width='5' height='5' fill='none' stroke='#1818e0' stroke-width='1'/><rect x='809.7' y='476.1' width='5' height='5' fill='none' stroke='#1818e0' stroke-width='1'/><rect x='810.9' y='477.2' width='5' height='5' fill='none' stroke='#1818e0' stroke-width='1'/><rect x='812.1' y='476.9' width='5' height='5' fill='none' stroke='#1818e0' stroke-width='1'/><rect x='813.3' y='477.3' width='5' height='5' fill='none' stroke='#1818e0' stroke-width='1'/><rect x='814.5' y='476.1' width='5' height='5' fill='none' stroke='#1818e0' stroke-width='1'/><rect x='815.7' y='476.9' width='5' height='5' fill='none' stroke='#1818e0' stroke-width='1'/><rect x='816.9' y='476.7' width='5' height='5' fill='none' stroke='#1818e0' stroke-width='1'/><rect x='818.1' y='477.0' width='5' height='5' fill='none' stroke='#1818e0' stroke-width='1'/><rect x='819.3' y='476.5' width='5' height='5' fill='none' stroke='#1818e0' stroke-width='1'/><rect x='820.5' y='477.3' width='5' height='5' fill='none' stroke='#1818e0' stroke-width='1'/><rect x='821.7' y='476.2' width='5' height='5' fill='none' stroke='#1818e0' stroke-width='1'/><rect x='822.9' y='476.8' width='5' height='5' fill='none' stroke='#1818e0' stroke-width='1'/><rect x='824.1' y='477.0' width='5' height='5' fill='none' stroke='#1818e0' stroke-width='1'/><rect x='825.3' y='477.2' width='5' height='5' fill='none' stroke='#1818e0' stroke-width='1'/><rect x='826.5' y='477.0' width='5' height='5' fill='none' stroke='#1818e0' stroke-width='1'/><rect x='827.7' y='476.9' width='5' height='5' fill='none' stroke='#1818e0' stroke-width='1'/><rect x='828.9' y='477.1' width='5' height='5' fill='none' stroke='#1818e0' stroke-width='1'/><rect x='830.1' y='477.2' width='5' height='5' fill='none' stroke='#1818e0' stroke-width='1'/><rect x='831.3' y='476.5' width='5' height='5' fill='none' stroke='#1818e0' stroke-width='1'/><rect x='832.5' y='476.9' width='5' height='5' fill='none' stroke='#1818e0' stroke-width='1'/><rect x='833.7' y='477.2' width='5' height='5' fill='none' stroke='#1818e0' stroke-width='1'/><rect x='834.9' y='477.1' width='5' height='5' fill='none' stroke='#1818e0' stroke-width='1'/><rect x='836.1' y='476.6' width='5' height='5' fill='none' stroke='#1818e0' stroke-width='1'/><rect x='837.3' y='477.0' width='5' height='5' fill='none' stroke='#1818e0' stroke-width='1'/><rect x='838.5' y='477.1' width='5' height='5' fill='none' stroke='#1818e0' stroke-width='1'/><rect x='839.7' y='476.8' width='5' height='5' fill='none' stroke='#1818e0' stroke-width='1'/><rect x='840.9' y='476.8' width='5' height='5' fill='none' stroke='#1818e0' stroke-width='1'/><rect x='842.1' y='476.6' width='5' height='5' fill='none' stroke='#1818e0' stroke-width='1'/><rect x='843.3' y='476.8' width='5' height='5' fill='none' stroke='#1818e0' stroke-width='1'/><rect x='844.5' y='476.8' width='5' height='5' fill='none' stroke='#1818e0' stroke-width='1'/><rect x='845.7' y='476.2' width='5' height='5' fill='none' stroke='#1818e0' stroke-width='1'/><rect x='846.9' y='476.9' width='5' height='5' fill='none' stroke='#1818e0' stroke-width='1'/><rect x='848.1' y='477.3' width='5' height='5' fill='none' stroke='#1818e0' stroke-width='1'/><rect x='849.3' y='477.2' width='5' height='5' fill='none' stroke='#1818e0' stroke-width='1'/><rect x='850.5' y='477.0' width='5' height='5' fill='none' stroke='#1818e0' stroke-width='1'/><rect x='851.7' y='476.6' width='5' height='5' fill='none' stroke='#1818e0' stroke-width='1'/><rect x='852.9' y='477.0' width='5' height='5' fill='none' stroke='#1818e0' stroke-width='1'/><rect x='854.1' y='476.8' width='5' height='5' fill='none' stroke='#1818e0' stroke-width='1'/><rect x='855.3' y='476.6' width='5' height='5' fill='none' stroke='#1818e0' stroke-width='1'/><rect x='856.5' y='477.1' width='5' height='5' fill='none' stroke='#1818e0' stroke-width='1'/><rect x='857.7' y='476.2' width='5' height='5' fill='none' stroke='#1818e0' stroke-width='1'/><rect x='858.9' y='477.0' width='5' height='5' fill='none' stroke='#1818e0' stroke-width='1'/><rect x='860.1' y='476.1' width='5' height='5' fill='none' stroke='#1818e0' stroke-width='1'/><rect x='861.3' y='476.8' width='5' height='5' fill='none' stroke='#1818e0' stroke-width='1'/><rect x='862.5' y='476.7' width='5' height='5' fill='none' stroke='#1818e0' stroke-width='1'/><rect x='863.7' y='476.4' width='5' height='5' fill='none' stroke='#1818e0' stroke-width='1'/><rect x='864.9' y='476.9' width='5' height='5' fill='none' stroke='#1818e0' stroke-width='1'/><rect x='866.1' y='476.7' width='5' height='5' fill='none' stroke='#1818e0' stroke-width='1'/><rect x='867.3' y='476.8' width='5' height='5' fill='none' stroke='#1818e0' stroke-width='1'/><rect x='868.5' y='477.2' width='5' height='5' fill='none' stroke='#1818e0' stroke-width='1'/><rect x='869.7' y='476.4' width='5' height='5' fill='none' stroke='#1818e0' stroke-width='1'/><rect x='870.9' y='476.1' width='5' height='5' fill='none' stroke='#1818e0' stroke-width='1'/><rect x='872.1' y='476.5' width='5' height='5' fill='none' stroke='#1818e0' stroke-width='1'/><rect x='873.3' y='476.9' width='5' height='5' fill='none' stroke='#1818e0' stroke-width='1'/><rect x='874.5' y='476.3' width='5' height='5' fill='none' stroke='#1818e0' stroke-width='1'/><rect x='875.7' y='476.3' width='5' height='5' fill='none' stroke='#1818e0' stroke-width='1'/><rect x='876.9' y='477.2' width='5' height='5' fill='none' stroke='#1818e0' stroke-width='1'/><rect x='878.1' y='477.7' width='5' height='5' fill='none' stroke='#1818e0' stroke-width='1'/><rect x='879.3' y='477.4' width='5' height='5' fill='none' stroke='#1818e0' stroke-width='1'/><rect x='880.5' y='478.0' width='5' height='5' fill='none' stroke='#1818e0' stroke-width='1'/><rect x='881.7' y='477.3' width='5' height='5' fill='none' stroke='#1818e0' stroke-width='1'/><rect x='882.9' y='477.7' width='5' height='5' fill='none' stroke='#1818e0' stroke-width='1'/><rect x='884.1' y='477.1' width='5' height='5' fill='none' stroke='#1818e0' stroke-width='1'/><rect x='885.3' y='477.4' width='5' height='5' fill='none' stroke='#1818e0' stroke-width='1'/><rect x='886.5' y='477.9' width='5' height='5' fill='none' stroke='#1818e0' stroke-width='1'/><rect x='887.7' y='478.0' width='5' height='5' fill='none' stroke='#1818e0' stroke-width='1'/><rect x='888.9' y='478.0' width='5' height='5' fill='none' stroke='#1818e0' stroke-width='1'/><rect x='890.1' y='477.4' width='5' height='5' fill='none' stroke='#1818e0' stroke-width='1'/><rect x='891.3' y='477.6' width='5' height='5' fill='none' stroke='#1818e0' stroke-width='1'/><rect x='892.5' y='477.3' width='5' height='5' fill='none' stroke='#1818e0' stroke-width='1'/><rect x='893.7' y='477.1' width='5' height='5' fill='none' stroke='#1818e0' stroke-width='1'/><rect x='894.9' y='477.5' width='5' height='5' fill='none' stroke='#1818e0' stroke-width='1'/><rect x='896.1' y='477.9' width='5' height='5' fill='none' stroke='#1818e0' stroke-width='1'/><rect x='897.3' y='477.9' width='5' height='5' fill='none' stroke='#1818e0' stroke-width='1'/><rect x='898.5' y='477.8' width='5' height='5' fill='none' stroke='#1818e0' stroke-width='1'/><rect x='899.7' y='478.0' width='5' height='5' fill='none' stroke='#1818e0' stroke-width='1'/><rect x='900.9' y='477.2' width='5' height='5' fill='none' stroke='#1818e0' stroke-width='1'/><rect x='902.1' y='477.1' width='5' height='5' fill='none' stroke='#1818e0' stroke-width='1'/><rect x='903.3' y='477.4' width='5' height='5' fill='none' stroke='#1818e0' stroke-width='1'/><rect x='904.5' y='477.2' width='5' height='5' fill='none' stroke='#1818e0' stroke-width='1'/><rect x='905.7' y='477.2' width='5' height='5' fill='none' stroke='#1818e0' stroke-width='1'/><rect x='906.9' y='477.4' width='5' height='5' fill='none' stroke='#1818e0' stroke-width='1'/><rect x='908.1' y='477.7' width='5' height='5' fill='none' stroke='#1818e0' stroke-width='1'/><rect x='909.3' y='477.5' width='5' height='5' fill='none' stroke='#1818e0' stroke-width='1'/><rect x='910.5' y='477.3' width='5' height='5' fill='none' stroke='#1818e0' stroke-width='1'/><rect x='911.7' y='477.9' width='5' height='5' fill='none' stroke='#1818e0' stroke-width='1'/><rect x='912.9' y='478.1' width='5' height='5' fill='none' stroke='#1818e0' stroke-width='1'/><rect x='914.1' y='477.4' width='5' height='5' fill='none' stroke='#1818e0' stroke-width='1'/><rect x='915.3' y='477.0' width='5' height='5' fill='none' stroke='#1818e0' stroke-width='1'/><rect x='916.5' y='476.9' width='5' height='5' fill='none' stroke='#1818e0' stroke-width='1'/><rect x='917.7' y='477.9' width='5' height='5' fill='none' stroke='#1818e0' stroke-width='1'/><rect x='918.9' y='476.9' width='5' height='5' fill='none' stroke='#1818e0' stroke-width='1'/><rect x='920.1' y='477.8' width='5' height='5' fill='none' stroke='#1818e0' stroke-width='1'/><rect x='921.3' y='477.6' width='5' height='5' fill='none' stroke='#1818e0' stroke-width='1'/><rect x='922.5' y='477.3' width='5' height='5' fill='none' stroke='#1818e0' stroke-width='1'/><rect x='923.7' y='477.8' width='5' height='5' fill='none' stroke='#1818e0' stroke-width='1'/><rect x='924.9' y='476.9' width='5' height='5' fill='none' stroke='#1818e0' stroke-width='1'/><rect x='926.1' y='477.1' width='5' height='5' fill='none' stroke='#1818e0' stroke-width='1'/><rect x='927.3' y='477.4' width='5' height='5' fill='none' stroke='#1818e0' stroke-width='1'/><rect x='928.5' y='476.9' width='5' height='5' fill='none' stroke='#1818e0' stroke-width='1'/><rect x='929.7' y='477.9' width='5' height='5' fill='none' stroke='#1818e0' stroke-width='1'/><rect x='930.9' y='477.2' width='5' height='5' fill='none' stroke='#1818e0' stroke-width='1'/><rect x='932.1' y='477.1' width='5' height='5' fill='none' stroke='#1818e0' stroke-width='1'/><rect x='933.3' y='477.0' width='5' height='5' fill='none' stroke='#1818e0' stroke-width='1'/><rect x='934.5' y='477.7' width='5' height='5' fill='none' stroke='#1818e0' stroke-width='1'/><rect x='935.7' y='477.4' width='5' height='5' fill='none' stroke='#1818e0' stroke-width='1'/><rect x='936.9' y='477.7' width='5' height='5' fill='none' stroke='#1818e0' stroke-width='1'/><rect x='938.1' y='477.7' width='5' height='5' fill='none' stroke='#1818e0' stroke-width='1'/><rect x='939.3' y='477.9' width='5' height='5' fill='none' stroke='#1818e0' stroke-width='1'/><rect x='941.0' y='478.0' width='5' height='5' fill='none' stroke='#1818e0' stroke-width='1'/><text x='548.0' y='395.5' font-family='Liberation Sans,sans-serif' font-size='11' fill='#111'>Axe Delta</text><line x1='863.5' x2='943.3' y1='376.5' y2='376.5' stroke='#d01818' stroke-width='1'/><circle cx='903.4' cy='376.5' r='2.8' fill='#fff' stroke='#c81010' stroke-width='1'/><text x='943.3' y='395.5' text-anchor='end' textLength='79.8' lengthAdjust='spacingAndGlyphs' font-family='Liberation Sans,sans-serif' font-size='11' fill='#111'>Err Delta (pixels)</text><line x1='776.2' x2='853.5' y1='376.5' y2='376.5' stroke='#1010c0' stroke-width='1'/><rect x='812.5' y='373.5' width='5' height='5' fill='#fff' stroke='#1818d0' stroke-width='1'/><text x='853.5' y='395.5' text-anchor='end' textLength='77.3' lengthAdjust='spacingAndGlyphs' font-family='Liberation Sans,sans-serif' font-size='11' fill='#111'>Corr Delta (sec)</text><text x='745.7' y='602.8' text-anchor='middle' font-family='Liberation Sans,sans-serif' font-size='11' fill='#111'>Temps (Min)</text><text x='961.0' y='436.5' text-anchor='middle' font-family='Liberation Sans,sans-serif' font-size='11' fill='#111'>P</text><text x='961.0' y='446.6' text-anchor='middle' font-family='Liberation Sans,sans-serif' font-size='11' fill='#111'>i</text><text x='961.0' y='456.6' text-anchor='middle' font-family='Liberation Sans,sans-serif' font-size='11' fill='#111'>x</text><text x='961.0' y='466.6' text-anchor='middle' font-family='Liberation Sans,sans-serif' font-size='11' fill='#111'>e</text><text x='961.0' y='476.7' text-anchor='middle' font-family='Liberation Sans,sans-serif' font-size='11' fill='#111'>l</text><text x='961.0' y='496.8' text-anchor='middle' font-family='Liberation Sans,sans-serif' font-size='11' fill='#111'>e</text><text x='961.0' y='506.9' text-anchor='middle' font-family='Liberation Sans,sans-serif' font-size='11' fill='#111'>t</text><text x='961.0' y='527.0' text-anchor='middle' font-family='Liberation Sans,sans-serif' font-size='11' fill='#111'>s</text><text x='961.0' y='537.0' text-anchor='middle' font-family='Liberation Sans,sans-serif' font-size='11' fill='#111'>e</text><text x='961.0' y='547.0' text-anchor='middle' font-family='Liberation Sans,sans-serif' font-size='11' fill='#111'>c</text></svg><div class='rb f' style='left:497.5px;top:617.5px;width:72.5px;height:19.0px;'></div><div class='t c ' style='left:493.5px;width:80px;top:620.5px;'>Réglages</div><div class='ct' style='left:497px;top:643px;color:#eee;font-family:"DejaVu Sans Condensed",sans-serif;font-size:10.5px;letter-spacing:-.1px'>495x252</div><div class='a' style='left:961.5px;top:566px;width:24.5px;height:93px;background:#5c5c5c'></div><div class='a' style='left:965.5px;top:586.5px;width:20.5px;height:72.5px;background:#262626'></div><div class='tt' style='left:970px;top:570px;font-size:11.5px'>Ro</div><div class='a' style='left:968px;top:595px;width:22px;height:75px;border:1px solid #777;border-radius:4px'></div><div class='a' style='left:976px;top:588px;width:10px;height:12px;background:#262626'></div><div class='t ' style='left:978px;top:585.5px;'>In</div><div class='cb' style='left:973.5px;top:620.5px;width:16.5px;height:12.5px;background:#f0f0f0'></div><svg class='a' style='left:974px;top:621px' width='12' height='12'><path d='M2.5 6L5 9.5L10 2.5' stroke='#e01010' stroke-width='2' fill='none'/></svg><div class='cb' style='left:973.5px;top:639px;width:16.5px;height:11.5px;background:#eee'></div><div class='cb' style='left:973.5px;top:656.5px;width:16.5px;height:11.5px;background:#eee'></div><div class='a' style='left:492px;top:329px;width:2px;height:1.5px;background:#ddd'></div><div class='a' style='left:495px;top:329px;width:3px;height:1.5px;background:#ddd'></div><div class='a' style='left:499px;top:329px;width:1px;height:1.5px;background:#ddd'></div><div class='a' style='left:651px;top:329px;width:1px;height:1.5px;background:#ddd'></div><div class='a' style='left:706px;top:329px;width:2px;height:1.5px;background:#ddd'></div><div class='a' style='left:812px;top:329px;width:1px;height:1.5px;background:#ddd'></div><div class='a' style='left:901px;top:329px;width:3px;height:1.5px;background:#ddd'></div><div class='a' style='left:906px;top:329px;width:2px;height:1.5px;background:#ddd'></div><div class='a' style='left:915px;top:329px;width:1px;height:1.5px;background:#ddd'></div></body></html>
